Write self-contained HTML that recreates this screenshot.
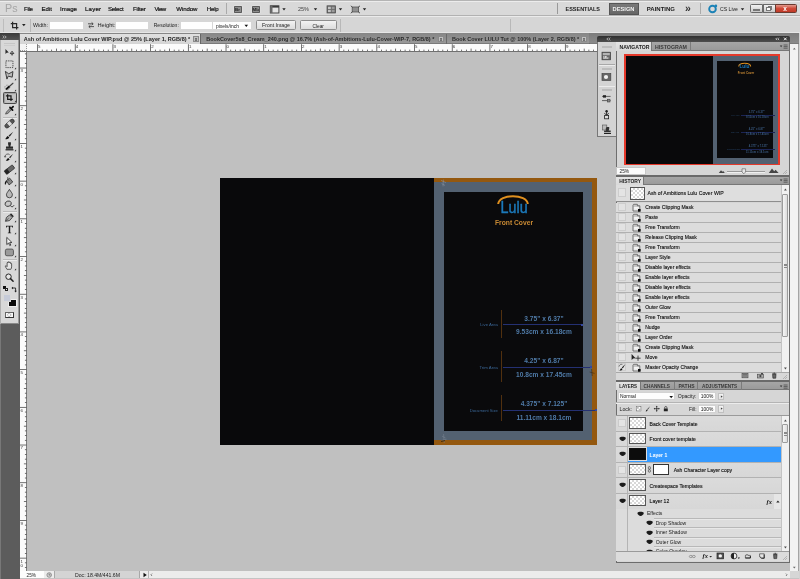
<!DOCTYPE html>
<html><head><meta charset="utf-8"><title>Photoshop</title>
<style>
html,body{margin:0;padding:0;}
body{width:800px;height:579px;overflow:hidden;position:relative;background:#c0c0c0;font-family:"Liberation Sans",sans-serif;}
#r{position:absolute;left:-6px;top:-6px;width:812px;height:591px;overflow:hidden;filter:blur(0.55px);}
#c{left:6px;top:6px;width:800px;height:579px;}
#r div,#r span,#r svg{position:absolute;box-sizing:border-box;}
#r span{white-space:nowrap;}
</style></head><body><div id="r"><div id="c">
<div style="left:-6px;top:-6px;width:812px;height:591px;background:#c0c0c0;"></div>
<div style="left:220px;top:178px;width:376.50px;height:267.00px;background:#09090b;overflow:hidden">
<div style="left:214.00px;top:0;width:162.50px;height:267.00px;background:#94580f"></div>
<div style="left:214.00px;top:4.30px;width:158.30px;height:258.10px;background:#536171"></div>
<div style="left:224.00px;top:13.60px;width:138.50px;height:239.10px;background:#0a0a0c"></div>
</div>
<svg style="left:494px;top:193px;" width="40" height="22" viewBox="0 0 40 22"><path d="M4.2 11 C5 0.5 33 0.5 33.8 11" fill="none" stroke="#e0901f" stroke-width="2"/></svg>
<span style="left:500.60px;top:199px;font-size:14.28px;line-height:16px;color:#1c79ba;font-weight:400;transform:scaleY(1.13);-webkit-text-stroke:0.4px #1c79ba;">Lulu</span>
<span style="left:495.00px;top:219px;font-size:6.71px;line-height:7px;color:#c98a34;font-weight:700;">Front Cover</span>
<div style="left:500.5px;top:310px;width:1px;height:27.5px;background:#51300f;"></div>
<div style="left:503px;top:324.1px;width:79px;height:1px;background:#243072;"></div>
<div style="left:580.5px;top:323.6px;width:2px;height:2px;background:#3347a0;"></div>
<span style="left:524.36px;top:315px;font-size:6.60px;line-height:7px;color:#4f7aa7;font-weight:700;">3.75" x 6.37"</span>
<span style="left:516.11px;top:328px;font-size:6.60px;line-height:7px;color:#4f7aa7;font-weight:700;">9.53cm x 16.18cm</span>
<span style="left:480.20px;top:322px;font-size:4.27px;line-height:5px;color:#3a6696;font-weight:400;">Live Area</span>
<div style="left:500.5px;top:351px;width:1px;height:30.5px;background:#51300f;"></div>
<div style="left:503px;top:366.8px;width:88.5px;height:1px;background:#243072;"></div>
<div style="left:590.0px;top:366.3px;width:2px;height:2px;background:#3347a0;"></div>
<span style="left:524.36px;top:357px;font-size:6.60px;line-height:7px;color:#4f7aa7;font-weight:700;">4.25" x 6.87"</span>
<span style="left:516.11px;top:371px;font-size:6.60px;line-height:7px;color:#4f7aa7;font-weight:700;">10.8cm x 17.45cm</span>
<span style="left:479.40px;top:365px;font-size:4.33px;line-height:5px;color:#3a6696;font-weight:400;">Trim Area</span>
<div style="left:500.5px;top:395.3px;width:1px;height:26.19999999999999px;background:#51300f;"></div>
<div style="left:503px;top:409.7px;width:93px;height:1px;background:#243072;"></div>
<div style="left:594.5px;top:409.2px;width:2px;height:2px;background:#3347a0;"></div>
<span style="left:520.69px;top:400px;font-size:6.60px;line-height:7px;color:#4f7aa7;font-weight:700;">4.375" x 7.125"</span>
<span style="left:516.47px;top:414px;font-size:6.60px;line-height:7px;color:#4f7aa7;font-weight:700;">11.11cm x 18.1cm</span>
<span style="left:469.70px;top:408px;font-size:4.17px;line-height:5px;color:#3a6696;font-weight:400;">Document Size</span>
<svg style="left:440px;top:179px;" width="8" height="10" viewBox="0 0 8 10"><path d="M1 1.4 L6 3.6 M3.4 0.6 L3 7.4 M1.6 4.6 L5 6.4" stroke="#8a93a0" stroke-width="0.7" fill="none" opacity="0.8"/></svg>
<svg style="left:440px;top:432px;" width="9" height="12" viewBox="0 0 9 12"><path d="M1.4 8.6 L6.6 7.2 M3.6 2 L4.2 11 M2 4.2 L5.6 6" stroke="#7d8794" stroke-width="0.7" fill="none" opacity="0.7"/><path d="M1 9.4 L5 8.6" stroke="#2a1c08" stroke-width="0.8"/></svg>
<svg style="left:588px;top:368px;" width="8" height="10" viewBox="0 0 8 10"><path d="M3.6 1 L4.2 8 M1.6 4 L6.6 5.4" stroke="#3a2a14" stroke-width="0.7" fill="none" opacity="0.8"/></svg>
<div style="left:790px;top:43.5px;width:16px;height:542px;background:#d0d0d0;"></div>
<div style="left:790.4px;top:43.5px;width:7.6px;height:527.3px;background:#f2f2f2;"></div>
<svg style="left:791px;top:46px;" width="7" height="5" viewBox="0 0 7 5"><path d="M1.9 1.8 L4.7 1.8 L3.3 3.6 Z" fill="#666" transform="rotate(180 3.3 2.7)"/></svg>
<svg style="left:791px;top:565px;" width="7" height="5" viewBox="0 0 7 5"><path d="M1.9 1.8 L4.7 1.8 L3.3 3.6 Z" fill="#666"/></svg>
<div style="left:19.5px;top:570.8px;width:787px;height:15px;background:#d2d2d2;"></div>
<div style="left:19.5px;top:571px;width:771px;height:6.7px;background:#ececec;"></div>
<div style="left:19.5px;top:577.7px;width:787px;height:8px;background:#c4c4c4;"></div>
<div style="left:790px;top:570.8px;width:16px;height:7px;background:#d6d6d6;"></div>
<div style="left:798px;top:43.5px;width:0.8px;height:527.5px;background:#a4a4a4;"></div>
<div style="left:20px;top:571.2px;width:23.6px;height:6.4px;background:#fdfdfd;"></div>
<span style="left:26.60px;top:573px;font-size:4.70px;line-height:5px;color:#222;font-weight:400;">25%</span>
<svg style="left:45.5px;top:571.6px;" width="7" height="6" viewBox="0 0 7 6"><circle cx="3.2" cy="3" r="2.3" fill="#cfcfcf" stroke="#777" stroke-width="0.7"/><path d="M3.2 1.6 V3.1 H4.4" stroke="#555" stroke-width="0.6" fill="none"/></svg>
<div style="left:54.3px;top:571px;width:86px;height:6.7px;background:#d4d4d4;border-left:0.6px solid #a8a8a8;border-right:0.6px solid #a8a8a8;"></div>
<span style="left:75.00px;top:572px;font-size:5.16px;line-height:6px;color:#222;font-weight:400;">Doc: 18.4M/441.6M</span>
<svg style="left:141.5px;top:571.6px;" width="6" height="6" viewBox="0 0 6 6"><path d="M1.5 0.8 L4.8 3 L1.5 5.2 Z" fill="#111"/></svg>
<div style="left:147.5px;top:571px;width:0.6px;height:6.7px;background:#b5b5b5;"></div>
<svg style="left:149px;top:572px;" width="5" height="6" viewBox="0 0 5 6"><path d="M3.1 1.6 L1.9 2.8 L3.1 4" stroke="#666" stroke-width="0.8" fill="none"/></svg>
<svg style="left:783.8px;top:572px;" width="5" height="6" viewBox="0 0 5 6"><path d="M1.9 1.6 L3.1 2.8 L1.9 4" stroke="#666" stroke-width="0.8" fill="none"/></svg>
<div style="left:19.5px;top:43.5px;width:578px;height:7.5px;background:#fbfbfb;"></div>
<div style="left:19.5px;top:43.5px;width:7.2px;height:527px;background:#fbfbfb;"></div>
<div style="left:19.5px;top:50.5px;width:578px;height:0.9px;background:#707070;"></div>
<div style="left:26.2px;top:43.5px;width:0.8px;height:527.3px;background:#7c7c7c;"></div>
<div style="left:19.5px;top:43.5px;width:7.2px;height:7.5px;background:#f4f4f4;border-right:0.6px dotted #999;border-bottom:0.6px dotted #999;"></div>
<svg style="left:0px;top:43.5px;" width="597.5" height="7.5" viewBox="0 0 597.5 7.5"><rect x="37.15" y="0.20" width="0.75" height="7" fill="#444"/><rect x="41.86" y="5.60" width="0.75" height="1.6" fill="#444"/><rect x="46.57" y="5.60" width="0.75" height="1.6" fill="#444"/><rect x="51.29" y="5.60" width="0.75" height="1.6" fill="#444"/><rect x="56.00" y="4.60" width="0.75" height="2.6" fill="#444"/><rect x="60.71" y="5.60" width="0.75" height="1.6" fill="#444"/><rect x="65.43" y="5.60" width="0.75" height="1.6" fill="#444"/><rect x="70.14" y="5.60" width="0.75" height="1.6" fill="#444"/><text x="38.10" y="4.4" font-size="4.4" fill="#3a3a3a" font-family="Liberation Sans, sans-serif">5</text><rect x="74.85" y="0.20" width="0.75" height="7" fill="#444"/><rect x="79.56" y="5.60" width="0.75" height="1.6" fill="#444"/><rect x="84.27" y="5.60" width="0.75" height="1.6" fill="#444"/><rect x="88.99" y="5.60" width="0.75" height="1.6" fill="#444"/><rect x="93.70" y="4.60" width="0.75" height="2.6" fill="#444"/><rect x="98.41" y="5.60" width="0.75" height="1.6" fill="#444"/><rect x="103.12" y="5.60" width="0.75" height="1.6" fill="#444"/><rect x="107.84" y="5.60" width="0.75" height="1.6" fill="#444"/><text x="75.80" y="4.4" font-size="4.4" fill="#3a3a3a" font-family="Liberation Sans, sans-serif">4</text><rect x="112.55" y="0.20" width="0.75" height="7" fill="#444"/><rect x="117.26" y="5.60" width="0.75" height="1.6" fill="#444"/><rect x="121.97" y="5.60" width="0.75" height="1.6" fill="#444"/><rect x="126.69" y="5.60" width="0.75" height="1.6" fill="#444"/><rect x="131.40" y="4.60" width="0.75" height="2.6" fill="#444"/><rect x="136.11" y="5.60" width="0.75" height="1.6" fill="#444"/><rect x="140.82" y="5.60" width="0.75" height="1.6" fill="#444"/><rect x="145.54" y="5.60" width="0.75" height="1.6" fill="#444"/><text x="113.50" y="4.4" font-size="4.4" fill="#3a3a3a" font-family="Liberation Sans, sans-serif">3</text><rect x="150.25" y="0.20" width="0.75" height="7" fill="#444"/><rect x="154.96" y="5.60" width="0.75" height="1.6" fill="#444"/><rect x="159.68" y="5.60" width="0.75" height="1.6" fill="#444"/><rect x="164.39" y="5.60" width="0.75" height="1.6" fill="#444"/><rect x="169.10" y="4.60" width="0.75" height="2.6" fill="#444"/><rect x="173.81" y="5.60" width="0.75" height="1.6" fill="#444"/><rect x="178.53" y="5.60" width="0.75" height="1.6" fill="#444"/><rect x="183.24" y="5.60" width="0.75" height="1.6" fill="#444"/><text x="151.20" y="4.4" font-size="4.4" fill="#3a3a3a" font-family="Liberation Sans, sans-serif">2</text><rect x="187.95" y="0.20" width="0.75" height="7" fill="#444"/><rect x="192.66" y="5.60" width="0.75" height="1.6" fill="#444"/><rect x="197.38" y="5.60" width="0.75" height="1.6" fill="#444"/><rect x="202.09" y="5.60" width="0.75" height="1.6" fill="#444"/><rect x="206.80" y="4.60" width="0.75" height="2.6" fill="#444"/><rect x="211.51" y="5.60" width="0.75" height="1.6" fill="#444"/><rect x="216.23" y="5.60" width="0.75" height="1.6" fill="#444"/><rect x="220.94" y="5.60" width="0.75" height="1.6" fill="#444"/><text x="188.90" y="4.4" font-size="4.4" fill="#3a3a3a" font-family="Liberation Sans, sans-serif">1</text><rect x="225.65" y="0.20" width="0.75" height="7" fill="#444"/><rect x="230.36" y="5.60" width="0.75" height="1.6" fill="#444"/><rect x="235.08" y="5.60" width="0.75" height="1.6" fill="#444"/><rect x="239.79" y="5.60" width="0.75" height="1.6" fill="#444"/><rect x="244.50" y="4.60" width="0.75" height="2.6" fill="#444"/><rect x="249.21" y="5.60" width="0.75" height="1.6" fill="#444"/><rect x="253.93" y="5.60" width="0.75" height="1.6" fill="#444"/><rect x="258.64" y="5.60" width="0.75" height="1.6" fill="#444"/><text x="226.60" y="4.4" font-size="4.4" fill="#3a3a3a" font-family="Liberation Sans, sans-serif">0</text><rect x="263.35" y="0.20" width="0.75" height="7" fill="#444"/><rect x="268.06" y="5.60" width="0.75" height="1.6" fill="#444"/><rect x="272.77" y="5.60" width="0.75" height="1.6" fill="#444"/><rect x="277.49" y="5.60" width="0.75" height="1.6" fill="#444"/><rect x="282.20" y="4.60" width="0.75" height="2.6" fill="#444"/><rect x="286.91" y="5.60" width="0.75" height="1.6" fill="#444"/><rect x="291.62" y="5.60" width="0.75" height="1.6" fill="#444"/><rect x="296.34" y="5.60" width="0.75" height="1.6" fill="#444"/><text x="264.30" y="4.4" font-size="4.4" fill="#3a3a3a" font-family="Liberation Sans, sans-serif">1</text><rect x="301.05" y="0.20" width="0.75" height="7" fill="#444"/><rect x="305.76" y="5.60" width="0.75" height="1.6" fill="#444"/><rect x="310.47" y="5.60" width="0.75" height="1.6" fill="#444"/><rect x="315.19" y="5.60" width="0.75" height="1.6" fill="#444"/><rect x="319.90" y="4.60" width="0.75" height="2.6" fill="#444"/><rect x="324.61" y="5.60" width="0.75" height="1.6" fill="#444"/><rect x="329.32" y="5.60" width="0.75" height="1.6" fill="#444"/><rect x="334.04" y="5.60" width="0.75" height="1.6" fill="#444"/><text x="302.00" y="4.4" font-size="4.4" fill="#3a3a3a" font-family="Liberation Sans, sans-serif">2</text><rect x="338.75" y="0.20" width="0.75" height="7" fill="#444"/><rect x="343.46" y="5.60" width="0.75" height="1.6" fill="#444"/><rect x="348.18" y="5.60" width="0.75" height="1.6" fill="#444"/><rect x="352.89" y="5.60" width="0.75" height="1.6" fill="#444"/><rect x="357.60" y="4.60" width="0.75" height="2.6" fill="#444"/><rect x="362.31" y="5.60" width="0.75" height="1.6" fill="#444"/><rect x="367.02" y="5.60" width="0.75" height="1.6" fill="#444"/><rect x="371.74" y="5.60" width="0.75" height="1.6" fill="#444"/><text x="339.70" y="4.4" font-size="4.4" fill="#3a3a3a" font-family="Liberation Sans, sans-serif">3</text><rect x="376.45" y="0.20" width="0.75" height="7" fill="#444"/><rect x="381.16" y="5.60" width="0.75" height="1.6" fill="#444"/><rect x="385.88" y="5.60" width="0.75" height="1.6" fill="#444"/><rect x="390.59" y="5.60" width="0.75" height="1.6" fill="#444"/><rect x="395.30" y="4.60" width="0.75" height="2.6" fill="#444"/><rect x="400.01" y="5.60" width="0.75" height="1.6" fill="#444"/><rect x="404.72" y="5.60" width="0.75" height="1.6" fill="#444"/><rect x="409.44" y="5.60" width="0.75" height="1.6" fill="#444"/><text x="377.40" y="4.4" font-size="4.4" fill="#3a3a3a" font-family="Liberation Sans, sans-serif">4</text><rect x="414.15" y="0.20" width="0.75" height="7" fill="#444"/><rect x="418.86" y="5.60" width="0.75" height="1.6" fill="#444"/><rect x="423.57" y="5.60" width="0.75" height="1.6" fill="#444"/><rect x="428.29" y="5.60" width="0.75" height="1.6" fill="#444"/><rect x="433.00" y="4.60" width="0.75" height="2.6" fill="#444"/><rect x="437.71" y="5.60" width="0.75" height="1.6" fill="#444"/><rect x="442.42" y="5.60" width="0.75" height="1.6" fill="#444"/><rect x="447.14" y="5.60" width="0.75" height="1.6" fill="#444"/><text x="415.10" y="4.4" font-size="4.4" fill="#3a3a3a" font-family="Liberation Sans, sans-serif">5</text><rect x="451.85" y="0.20" width="0.75" height="7" fill="#444"/><rect x="456.56" y="5.60" width="0.75" height="1.6" fill="#444"/><rect x="461.28" y="5.60" width="0.75" height="1.6" fill="#444"/><rect x="465.99" y="5.60" width="0.75" height="1.6" fill="#444"/><rect x="470.70" y="4.60" width="0.75" height="2.6" fill="#444"/><rect x="475.41" y="5.60" width="0.75" height="1.6" fill="#444"/><rect x="480.12" y="5.60" width="0.75" height="1.6" fill="#444"/><rect x="484.84" y="5.60" width="0.75" height="1.6" fill="#444"/><text x="452.80" y="4.4" font-size="4.4" fill="#3a3a3a" font-family="Liberation Sans, sans-serif">6</text><rect x="489.55" y="0.20" width="0.75" height="7" fill="#444"/><rect x="494.26" y="5.60" width="0.75" height="1.6" fill="#444"/><rect x="498.98" y="5.60" width="0.75" height="1.6" fill="#444"/><rect x="503.69" y="5.60" width="0.75" height="1.6" fill="#444"/><rect x="508.40" y="4.60" width="0.75" height="2.6" fill="#444"/><rect x="513.11" y="5.60" width="0.75" height="1.6" fill="#444"/><rect x="517.83" y="5.60" width="0.75" height="1.6" fill="#444"/><rect x="522.54" y="5.60" width="0.75" height="1.6" fill="#444"/><text x="490.50" y="4.4" font-size="4.4" fill="#3a3a3a" font-family="Liberation Sans, sans-serif">7</text><rect x="527.25" y="0.20" width="0.75" height="7" fill="#444"/><rect x="531.96" y="5.60" width="0.75" height="1.6" fill="#444"/><rect x="536.67" y="5.60" width="0.75" height="1.6" fill="#444"/><rect x="541.39" y="5.60" width="0.75" height="1.6" fill="#444"/><rect x="546.10" y="4.60" width="0.75" height="2.6" fill="#444"/><rect x="550.81" y="5.60" width="0.75" height="1.6" fill="#444"/><rect x="555.52" y="5.60" width="0.75" height="1.6" fill="#444"/><rect x="560.24" y="5.60" width="0.75" height="1.6" fill="#444"/><text x="528.20" y="4.4" font-size="4.4" fill="#3a3a3a" font-family="Liberation Sans, sans-serif">8</text><rect x="564.95" y="0.20" width="0.75" height="7" fill="#444"/><rect x="569.66" y="5.60" width="0.75" height="1.6" fill="#444"/><rect x="574.37" y="5.60" width="0.75" height="1.6" fill="#444"/><rect x="579.09" y="5.60" width="0.75" height="1.6" fill="#444"/><rect x="583.80" y="4.60" width="0.75" height="2.6" fill="#444"/><rect x="588.51" y="5.60" width="0.75" height="1.6" fill="#444"/><rect x="593.22" y="5.60" width="0.75" height="1.6" fill="#444"/><text x="565.90" y="4.4" font-size="4.4" fill="#3a3a3a" font-family="Liberation Sans, sans-serif">9</text></svg>
<svg style="left:0px;top:0px;" width="27" height="571" viewBox="0 0 27 571"><rect x="24.90" y="53.51" width="1.6" height="0.75" fill="#444"/><rect x="24.90" y="58.22" width="1.6" height="0.75" fill="#444"/><rect x="24.90" y="62.94" width="1.6" height="0.75" fill="#444"/><rect x="19.50" y="67.65" width="7" height="0.75" fill="#444"/><rect x="24.90" y="72.36" width="1.6" height="0.75" fill="#444"/><rect x="24.90" y="77.07" width="1.6" height="0.75" fill="#444"/><rect x="24.90" y="81.79" width="1.6" height="0.75" fill="#444"/><rect x="23.90" y="86.50" width="2.6" height="0.75" fill="#444"/><rect x="24.90" y="91.21" width="1.6" height="0.75" fill="#444"/><rect x="24.90" y="95.92" width="1.6" height="0.75" fill="#444"/><rect x="24.90" y="100.64" width="1.6" height="0.75" fill="#444"/><text x="20.6" y="72.40" font-size="4.4" fill="#3a3a3a" font-family="Liberation Sans, sans-serif">3</text><rect x="19.50" y="105.35" width="7" height="0.75" fill="#444"/><rect x="24.90" y="110.06" width="1.6" height="0.75" fill="#444"/><rect x="24.90" y="114.77" width="1.6" height="0.75" fill="#444"/><rect x="24.90" y="119.49" width="1.6" height="0.75" fill="#444"/><rect x="23.90" y="124.20" width="2.6" height="0.75" fill="#444"/><rect x="24.90" y="128.91" width="1.6" height="0.75" fill="#444"/><rect x="24.90" y="133.62" width="1.6" height="0.75" fill="#444"/><rect x="24.90" y="138.34" width="1.6" height="0.75" fill="#444"/><text x="20.6" y="110.10" font-size="4.4" fill="#3a3a3a" font-family="Liberation Sans, sans-serif">2</text><rect x="19.50" y="143.05" width="7" height="0.75" fill="#444"/><rect x="24.90" y="147.76" width="1.6" height="0.75" fill="#444"/><rect x="24.90" y="152.47" width="1.6" height="0.75" fill="#444"/><rect x="24.90" y="157.19" width="1.6" height="0.75" fill="#444"/><rect x="23.90" y="161.90" width="2.6" height="0.75" fill="#444"/><rect x="24.90" y="166.61" width="1.6" height="0.75" fill="#444"/><rect x="24.90" y="171.32" width="1.6" height="0.75" fill="#444"/><rect x="24.90" y="176.04" width="1.6" height="0.75" fill="#444"/><text x="20.6" y="147.80" font-size="4.4" fill="#3a3a3a" font-family="Liberation Sans, sans-serif">1</text><rect x="19.50" y="180.75" width="7" height="0.75" fill="#444"/><rect x="24.90" y="185.46" width="1.6" height="0.75" fill="#444"/><rect x="24.90" y="190.18" width="1.6" height="0.75" fill="#444"/><rect x="24.90" y="194.89" width="1.6" height="0.75" fill="#444"/><rect x="23.90" y="199.60" width="2.6" height="0.75" fill="#444"/><rect x="24.90" y="204.31" width="1.6" height="0.75" fill="#444"/><rect x="24.90" y="209.03" width="1.6" height="0.75" fill="#444"/><rect x="24.90" y="213.74" width="1.6" height="0.75" fill="#444"/><text x="20.6" y="185.50" font-size="4.4" fill="#3a3a3a" font-family="Liberation Sans, sans-serif">0</text><rect x="19.50" y="218.45" width="7" height="0.75" fill="#444"/><rect x="24.90" y="223.16" width="1.6" height="0.75" fill="#444"/><rect x="24.90" y="227.88" width="1.6" height="0.75" fill="#444"/><rect x="24.90" y="232.59" width="1.6" height="0.75" fill="#444"/><rect x="23.90" y="237.30" width="2.6" height="0.75" fill="#444"/><rect x="24.90" y="242.01" width="1.6" height="0.75" fill="#444"/><rect x="24.90" y="246.73" width="1.6" height="0.75" fill="#444"/><rect x="24.90" y="251.44" width="1.6" height="0.75" fill="#444"/><text x="20.6" y="223.20" font-size="4.4" fill="#3a3a3a" font-family="Liberation Sans, sans-serif">1</text><rect x="19.50" y="256.15" width="7" height="0.75" fill="#444"/><rect x="24.90" y="260.86" width="1.6" height="0.75" fill="#444"/><rect x="24.90" y="265.57" width="1.6" height="0.75" fill="#444"/><rect x="24.90" y="270.29" width="1.6" height="0.75" fill="#444"/><rect x="23.90" y="275.00" width="2.6" height="0.75" fill="#444"/><rect x="24.90" y="279.71" width="1.6" height="0.75" fill="#444"/><rect x="24.90" y="284.42" width="1.6" height="0.75" fill="#444"/><rect x="24.90" y="289.14" width="1.6" height="0.75" fill="#444"/><text x="20.6" y="260.90" font-size="4.4" fill="#3a3a3a" font-family="Liberation Sans, sans-serif">2</text><rect x="19.50" y="293.85" width="7" height="0.75" fill="#444"/><rect x="24.90" y="298.56" width="1.6" height="0.75" fill="#444"/><rect x="24.90" y="303.27" width="1.6" height="0.75" fill="#444"/><rect x="24.90" y="307.99" width="1.6" height="0.75" fill="#444"/><rect x="23.90" y="312.70" width="2.6" height="0.75" fill="#444"/><rect x="24.90" y="317.41" width="1.6" height="0.75" fill="#444"/><rect x="24.90" y="322.12" width="1.6" height="0.75" fill="#444"/><rect x="24.90" y="326.84" width="1.6" height="0.75" fill="#444"/><text x="20.6" y="298.60" font-size="4.4" fill="#3a3a3a" font-family="Liberation Sans, sans-serif">3</text><rect x="19.50" y="331.55" width="7" height="0.75" fill="#444"/><rect x="24.90" y="336.26" width="1.6" height="0.75" fill="#444"/><rect x="24.90" y="340.97" width="1.6" height="0.75" fill="#444"/><rect x="24.90" y="345.69" width="1.6" height="0.75" fill="#444"/><rect x="23.90" y="350.40" width="2.6" height="0.75" fill="#444"/><rect x="24.90" y="355.11" width="1.6" height="0.75" fill="#444"/><rect x="24.90" y="359.82" width="1.6" height="0.75" fill="#444"/><rect x="24.90" y="364.54" width="1.6" height="0.75" fill="#444"/><text x="20.6" y="336.30" font-size="4.4" fill="#3a3a3a" font-family="Liberation Sans, sans-serif">4</text><rect x="19.50" y="369.25" width="7" height="0.75" fill="#444"/><rect x="24.90" y="373.96" width="1.6" height="0.75" fill="#444"/><rect x="24.90" y="378.68" width="1.6" height="0.75" fill="#444"/><rect x="24.90" y="383.39" width="1.6" height="0.75" fill="#444"/><rect x="23.90" y="388.10" width="2.6" height="0.75" fill="#444"/><rect x="24.90" y="392.81" width="1.6" height="0.75" fill="#444"/><rect x="24.90" y="397.52" width="1.6" height="0.75" fill="#444"/><rect x="24.90" y="402.24" width="1.6" height="0.75" fill="#444"/><text x="20.6" y="374.00" font-size="4.4" fill="#3a3a3a" font-family="Liberation Sans, sans-serif">5</text><rect x="19.50" y="406.95" width="7" height="0.75" fill="#444"/><rect x="24.90" y="411.66" width="1.6" height="0.75" fill="#444"/><rect x="24.90" y="416.38" width="1.6" height="0.75" fill="#444"/><rect x="24.90" y="421.09" width="1.6" height="0.75" fill="#444"/><rect x="23.90" y="425.80" width="2.6" height="0.75" fill="#444"/><rect x="24.90" y="430.51" width="1.6" height="0.75" fill="#444"/><rect x="24.90" y="435.22" width="1.6" height="0.75" fill="#444"/><rect x="24.90" y="439.94" width="1.6" height="0.75" fill="#444"/><text x="20.6" y="411.70" font-size="4.4" fill="#3a3a3a" font-family="Liberation Sans, sans-serif">6</text><rect x="19.50" y="444.65" width="7" height="0.75" fill="#444"/><rect x="24.90" y="449.36" width="1.6" height="0.75" fill="#444"/><rect x="24.90" y="454.07" width="1.6" height="0.75" fill="#444"/><rect x="24.90" y="458.79" width="1.6" height="0.75" fill="#444"/><rect x="23.90" y="463.50" width="2.6" height="0.75" fill="#444"/><rect x="24.90" y="468.21" width="1.6" height="0.75" fill="#444"/><rect x="24.90" y="472.92" width="1.6" height="0.75" fill="#444"/><rect x="24.90" y="477.64" width="1.6" height="0.75" fill="#444"/><text x="20.6" y="449.40" font-size="4.4" fill="#3a3a3a" font-family="Liberation Sans, sans-serif">7</text><rect x="19.50" y="482.35" width="7" height="0.75" fill="#444"/><rect x="24.90" y="487.06" width="1.6" height="0.75" fill="#444"/><rect x="24.90" y="491.78" width="1.6" height="0.75" fill="#444"/><rect x="24.90" y="496.49" width="1.6" height="0.75" fill="#444"/><rect x="23.90" y="501.20" width="2.6" height="0.75" fill="#444"/><rect x="24.90" y="505.91" width="1.6" height="0.75" fill="#444"/><rect x="24.90" y="510.62" width="1.6" height="0.75" fill="#444"/><rect x="24.90" y="515.34" width="1.6" height="0.75" fill="#444"/><text x="20.6" y="487.10" font-size="4.4" fill="#3a3a3a" font-family="Liberation Sans, sans-serif">8</text><rect x="19.50" y="520.05" width="7" height="0.75" fill="#444"/><rect x="24.90" y="524.76" width="1.6" height="0.75" fill="#444"/><rect x="24.90" y="529.47" width="1.6" height="0.75" fill="#444"/><rect x="24.90" y="534.19" width="1.6" height="0.75" fill="#444"/><rect x="23.90" y="538.90" width="2.6" height="0.75" fill="#444"/><rect x="24.90" y="543.61" width="1.6" height="0.75" fill="#444"/><rect x="24.90" y="548.32" width="1.6" height="0.75" fill="#444"/><rect x="24.90" y="553.04" width="1.6" height="0.75" fill="#444"/><text x="20.6" y="524.80" font-size="4.4" fill="#3a3a3a" font-family="Liberation Sans, sans-serif">9</text><rect x="19.50" y="557.75" width="7" height="0.75" fill="#444"/><rect x="24.90" y="562.46" width="1.6" height="0.75" fill="#444"/><rect x="24.90" y="567.17" width="1.6" height="0.75" fill="#444"/><text x="20.6" y="562.50" font-size="4.4" fill="#3a3a3a" font-family="Liberation Sans, sans-serif">1</text><text x="20.6" y="566.90" font-size="4.4" fill="#3a3a3a" font-family="Liberation Sans, sans-serif">0</text></svg>
<div style="left:-6px;top:-6px;width:812px;height:22.5px;background:#d9d9d9;"></div>
<div style="left:-6px;top:-6px;width:812px;height:6.6px;background:#b4b4b4;"></div>
<div style="left:-6px;top:0.6px;width:812px;height:1px;background:#ececec;"></div>
<div style="left:-6px;top:15.3px;width:812px;height:0.9px;background:#b2b2b2;"></div>
<div style="left:-6px;top:16.2px;width:812px;height:0.9px;background:#ebebeb;"></div>
<span style="left:5.00px;top:2px;font-size:10.71px;line-height:12px;color:#a6a6a6;font-weight:400;">Ps</span>
<span style="left:24.00px;top:5px;font-size:6.10px;line-height:7px;color:#111;font-weight:400;letter-spacing:-0.277px;-webkit-text-stroke:0.18px #111;">File</span>
<span style="left:41.50px;top:5px;font-size:6.10px;line-height:7px;color:#111;font-weight:400;letter-spacing:-0.004px;-webkit-text-stroke:0.18px #111;">Edit</span>
<span style="left:60.00px;top:5px;font-size:6.10px;line-height:7px;color:#111;font-weight:400;letter-spacing:0.011px;-webkit-text-stroke:0.18px #111;">Image</span>
<span style="left:85.00px;top:5px;font-size:6.10px;line-height:7px;color:#111;font-weight:400;letter-spacing:0.185px;-webkit-text-stroke:0.18px #111;">Layer</span>
<span style="left:108.00px;top:5px;font-size:6.10px;line-height:7px;color:#111;font-weight:400;letter-spacing:-0.241px;-webkit-text-stroke:0.18px #111;">Select</span>
<span style="left:133.00px;top:5px;font-size:6.10px;line-height:7px;color:#111;font-weight:400;letter-spacing:-0.161px;-webkit-text-stroke:0.18px #111;">Filter</span>
<span style="left:154.50px;top:5px;font-size:6.10px;line-height:7px;color:#111;font-weight:400;letter-spacing:-0.454px;-webkit-text-stroke:0.18px #111;">View</span>
<span style="left:176.25px;top:5px;font-size:6.10px;line-height:7px;color:#111;font-weight:400;letter-spacing:-0.089px;-webkit-text-stroke:0.18px #111;">Window</span>
<span style="left:206.75px;top:5px;font-size:6.10px;line-height:7px;color:#111;font-weight:400;letter-spacing:-0.182px;-webkit-text-stroke:0.18px #111;">Help</span>
<div style="left:226px;top:3px;width:0.7px;height:11px;background:#aaa;"></div>
<div style="left:234px;top:5.5px;width:8.4px;height:7.2px;background:#8e8e8e;border:0.6px solid #5a5a5a;border-radius:0.8px;box-shadow:0 0 0 0.5px #e6e6e6;"></div>
<span style="left:235.10px;top:7px;font-size:4.40px;line-height:5px;color:#262626;font-weight:700;">Br</span>
<div style="left:251.5px;top:5.5px;width:8.4px;height:7.2px;background:#8e8e8e;border:0.6px solid #5a5a5a;border-radius:0.8px;box-shadow:0 0 0 0.5px #e6e6e6;"></div>
<span style="left:252.60px;top:7px;font-size:4.40px;line-height:5px;color:#262626;font-weight:700;">Mb</span>
<svg style="left:269px;top:3.5px;" width="18" height="11" viewBox="0 0 18 11"><rect x="1.3" y="1.8" width="8.6" height="7.2" fill="#e4e4e4" stroke="#3a3a3a" stroke-width="0.9"/><rect x="1.3" y="1.8" width="8.6" height="1.8" fill="#3a3a3a"/><rect x="1.3" y="1.8" width="2.2" height="7.2" fill="#6a6a6a"/><path d="M13.3 4.3 h3.4 l-1.7 2.2z" fill="#222"/></svg>
<span style="left:298.00px;top:6px;font-size:5.50px;line-height:6px;color:#444;font-weight:400;">25%</span>
<svg style="left:312px;top:3.5px;" width="8" height="11" viewBox="0 0 8 11"><path d="M1.8 4.3 h3.4 l-1.7 2.2z" fill="#222"/></svg>
<svg style="left:325px;top:3.5px;" width="20" height="11" viewBox="0 0 20 11"><rect x="2" y="1.8" width="8.6" height="7.2" fill="#6e6e6e" stroke="#4a4a4a" stroke-width="0.7"/><rect x="3" y="2.8" width="2.8" height="2.2" fill="#c4c4c4"/><rect x="6.8" y="2.8" width="2.8" height="2.2" fill="#9a9a9a"/><rect x="3" y="5.9" width="2.8" height="2.2" fill="#c4c4c4"/><rect x="6.8" y="5.9" width="2.8" height="2.2" fill="#9a9a9a"/><path d="M13.8 4.3 h3.4 l-1.7 2.2z" fill="#222"/></svg>
<svg style="left:349px;top:3.5px;" width="20" height="11" viewBox="0 0 20 11"><rect x="3.2" y="3" width="6.4" height="5" fill="#909090" stroke="#555" stroke-width="0.8"/><path d="M1.8 1.8 L3.6 3.4 M11 1.8 L9.2 3.4 M1.8 9.2 L3.6 7.6 M11 9.2 L9.2 7.6" stroke="#444" stroke-width="0.9"/><path d="M13.8 4.3 h3.4 l-1.7 2.2z" fill="#222"/></svg>
<div style="left:557px;top:3px;width:0.8px;height:11px;background:#999;"></div>
<span style="left:565.50px;top:6px;font-size:5.49px;line-height:6px;color:#1a1a1a;font-weight:700;">ESSENTIALS</span>
<div style="left:608.5px;top:2.5px;width:30.5px;height:12px;background:linear-gradient(#7a7a7a,#666);border:0.6px solid #555;"></div>
<span style="left:612.50px;top:6px;font-size:5.74px;line-height:6px;color:#f2f2f2;font-weight:700;">DESIGN</span>
<span style="left:646.75px;top:6px;font-size:6.01px;line-height:6px;color:#1a1a1a;font-weight:700;">PAINTING</span>
<span style="left:685.00px;top:2px;font-size:10.50px;line-height:12px;color:#333;font-weight:700;">»</span>
<div style="left:700px;top:3px;width:0.8px;height:11px;background:#aaa;"></div>
<svg style="left:707px;top:3px;" width="12" height="12" viewBox="0 0 12 12"><circle cx="5.5" cy="6" r="3.3" fill="none" stroke="#1b82b6" stroke-width="1.9"/><circle cx="8.9" cy="2.9" r="1.3" fill="#1b82b6"/></svg>
<span style="left:720.00px;top:6px;font-size:5.14px;line-height:6px;color:#1a1a1a;font-weight:400;">CS Live</span>
<svg style="left:738.5px;top:3.5px;" width="8" height="11" viewBox="0 0 8 11"><path d="M1.8 4.3 h3.4 l-1.7 2.2z" fill="#222"/></svg>
<div style="left:749.5px;top:3.5px;width:13.5px;height:9.5px;background:linear-gradient(#f2f2f2,#c9c9c9);border:0.7px solid #6a6a6a;border-radius:1.5px 0 0 1.5px;"></div>
<div style="left:753px;top:8.6px;width:6.5px;height:2.6px;background:#fafafa;border:0.6px solid #777;"></div>
<div style="left:762.5px;top:3.5px;width:13px;height:9.5px;background:linear-gradient(#f2f2f2,#c9c9c9);border:0.7px solid #6a6a6a;"></div>
<div style="left:767.5px;top:5.8px;width:4.8px;height:3.8px;background:#f2f2f2;border:0.6px solid #777;"></div>
<div style="left:765.8px;top:7.4px;width:4.8px;height:3.8px;background:#fafafa;border:0.6px solid #777;"></div>
<div style="left:775px;top:3.5px;width:21.5px;height:9.5px;background:linear-gradient(#e29a8c,#cf4a38 50%,#c03a28);border:0.7px solid #6a3a30;border-radius:0 1.5px 1.5px 0;"></div>
<span style="left:783.20px;top:5px;font-size:6.50px;line-height:7px;color:#fff;font-weight:700;">x</span>
<div style="left:-6px;top:17.1px;width:812px;height:16.7px;background:#d6d6d6;"></div>
<div style="left:-6px;top:32px;width:812px;height:0.9px;background:#e6e6e6;"></div>
<div style="left:2.5px;top:19px;width:0.8px;height:13px;background:#bdbdbd;"></div>
<svg style="left:9.5px;top:20.5px;" width="10" height="10" viewBox="0 0 10 10"><path d="M2.6 0.8 V6.6 H8.4 M0.8 2.6 H6.6 V8.4" fill="none" stroke="#2a2a2a" stroke-width="1.2"/></svg>
<svg style="left:20.5px;top:20px;" width="6" height="10" viewBox="0 0 6 10"><path d="M1 4 h3.6 l-1.8 2.3z" fill="#222"/></svg>
<div style="left:30px;top:19px;width:0.8px;height:13px;background:#b8b8b8;"></div>
<span style="left:33.00px;top:22px;font-size:5.29px;line-height:6px;color:#222;font-weight:400;">Width:</span>
<div style="left:50px;top:21.6px;width:32.5px;height:7.8px;background:#fefefe;"></div>
<svg style="left:86.5px;top:21px;" width="8" height="8" viewBox="0 0 8 8"><path d="M1 2.8 H6 M4.6 1.4 L6.2 2.8 L4.6 4.2 M7 5.6 H2 M3.4 4.2 L1.8 5.6 L3.4 7" stroke="#333" stroke-width="0.8" fill="none"/></svg>
<span style="left:97.50px;top:22px;font-size:5.68px;line-height:6px;color:#222;font-weight:400;">Height:</span>
<div style="left:116.2px;top:21.6px;width:32px;height:7.8px;background:#fefefe;"></div>
<span style="left:153.75px;top:22px;font-size:5.00px;line-height:6px;color:#222;font-weight:400;">Resolution:</span>
<div style="left:180.5px;top:21.6px;width:31.5px;height:7.8px;background:#fefefe;"></div>
<div style="left:213.4px;top:21.6px;width:37.2px;height:7.8px;background:#fefefe;"></div>
<span style="left:216.00px;top:24px;font-size:4.93px;line-height:5px;color:#222;font-weight:400;">pixels/inch</span>
<svg style="left:243px;top:21px;" width="7" height="9" viewBox="0 0 7 9"><path d="M1.5 3.7 h3.6 l-1.8 2.3z" fill="#111"/></svg>
<div style="left:256.2px;top:20px;width:39.6px;height:9.6px;background:linear-gradient(#f3f3f3,#dcdcdc);border:0.6px solid #8e8e8e;border-radius:1.5px;"></div>
<span style="left:262.00px;top:22px;font-size:5.19px;line-height:6px;color:#222;font-weight:400;">Front Image</span>
<div style="left:300px;top:20px;width:36.8px;height:9.6px;background:linear-gradient(#f3f3f3,#dcdcdc);border:0.6px solid #8e8e8e;border-radius:1.5px;"></div>
<span style="left:312.50px;top:24px;font-size:4.81px;line-height:5px;color:#222;font-weight:400;">Clear</span>
<div style="left:340px;top:19px;width:0.8px;height:13px;background:#b8b8b8;"></div>
<div style="left:509.5px;top:19px;width:0.8px;height:13px;background:#b8b8b8;"></div>
<div style="left:19.5px;top:32.9px;width:786.5px;height:10.8px;background:linear-gradient(#868686,#9a9a9a);"></div>
<div style="left:19.5px;top:43.2px;width:786.5px;height:0.6px;background:#7a7a7a;"></div>
<div style="left:19.5px;top:34px;width:181px;height:9.7px;background:linear-gradient(#e0e0e0,#d4d4d4);border-right:0.6px solid #666;"></div>
<span style="left:23.80px;top:36px;font-size:5.54px;line-height:6px;color:#1e1e1e;font-weight:700;">Ash of Ambitions Lulu Cover WIP.psd @ 25% (Layer 1, RGB/8) *</span>
<div style="left:193.3px;top:36.3px;width:5.6px;height:5.4px;background:#c2c2c2;border:0.5px solid #8a8a8a;"></div>
<span style="left:194.80px;top:37px;font-size:4.60px;line-height:5px;color:#444;font-weight:700;">x</span>
<span style="left:206.25px;top:36px;font-size:5.48px;line-height:6px;color:#2a2a2a;font-weight:700;">BookCover5x8_Cream_240.png @ 16.7% (Ash-of-Ambitions-Lulu-Cover-WIP-7, RGB/8) *</span>
<div style="left:438.3px;top:36.3px;width:5.6px;height:5.4px;background:#c2c2c2;border:0.5px solid #8a8a8a;"></div>
<span style="left:439.80px;top:37px;font-size:4.60px;line-height:5px;color:#444;font-weight:700;">x</span>
<div style="left:446px;top:34.3px;width:0.7px;height:9.4px;background:#6a6a6a;"></div>
<span style="left:452.00px;top:36px;font-size:5.51px;line-height:6px;color:#2a2a2a;font-weight:700;">Book Cover LULU Tut @ 100% (Layer 2, RGB/8) *</span>
<div style="left:581.3px;top:36.3px;width:5.6px;height:5.4px;background:#c2c2c2;border:0.5px solid #8a8a8a;"></div>
<span style="left:582.80px;top:37px;font-size:4.60px;line-height:5px;color:#444;font-weight:700;">x</span>
<div style="left:588.5px;top:34.3px;width:0.7px;height:9.4px;background:#6a6a6a;"></div>
<div style="left:589.2px;top:32.9px;width:217px;height:10.3px;background:linear-gradient(#7c7c7c,#8a8a8a);"></div>
<div style="left:-6px;top:32.9px;width:25.5px;height:552.1px;background:#5c5c5c;"></div>
<div style="left:-6px;top:32.9px;width:25.2px;height:7px;background:linear-gradient(#3a3a3a,#555);"></div>
<svg style="left:2px;top:34.9px;" width="6" height="4" viewBox="0 0 6 4"><path d="M0.8 0.6 L2.2 2 L0.8 3.4 M2.8 0.6 L4.2 2 L2.8 3.4" stroke="#ddd" stroke-width="0.7" fill="none"/></svg>
<div style="left:0.8px;top:40px;width:18px;height:284.2px;background:#d8d8d8;border-right:0.7px solid #9a9a9a;border-bottom:0.7px solid #8a8a8a;"></div>
<div style="left:-6px;top:40px;width:6.9px;height:284.2px;background:#b0b0b0;"></div>
<div style="left:-6px;top:324.2px;width:6.9px;height:260px;background:#787878;"></div>
<div style="left:4px;top:43.2px;width:11px;height:0.6px;background:#c6c6c6;"></div>
<div style="left:4px;top:44.6px;width:11px;height:0.6px;background:#cdcdcd;"></div>
<div style="left:2.5px;top:116.8px;width:14.5px;height:0.7px;background:#b9b9b9;"></div>
<div style="left:2.5px;top:117.5px;width:14.5px;height:0.6px;background:#eaeaea;"></div>
<div style="left:2.5px;top:210.8px;width:14.5px;height:0.7px;background:#b9b9b9;"></div>
<div style="left:2.5px;top:211.5px;width:14.5px;height:0.6px;background:#eaeaea;"></div>
<div style="left:2.5px;top:258.8px;width:14.5px;height:0.7px;background:#b9b9b9;"></div>
<div style="left:2.5px;top:259.5px;width:14.5px;height:0.6px;background:#eaeaea;"></div>
<svg style="left:0px;top:45.599999999999994px;" width="19" height="13" viewBox="0 0 19 13"><g transform="translate(9.5 6.5) scale(0.88) translate(-9.5 -6.5)"><path d="M4.9 2.6 V8.2 L6.4 6.9 L8.7 6.5 Z" fill="#2a2a2a"/><path d="M12.4 5.4 V9.4 M10.4 7.4 H14.4" stroke="#2a2a2a" stroke-width="0.9"/><path d="M12.4 4.7 l-1.1 1.3h2.2z M12.4 10.1 l-1.1 -1.3h2.2z M9.7 7.4 l1.3 -1.1v2.2z M15.1 7.4 l-1.3 -1.1v2.2z" fill="#2a2a2a"/></g></svg>
<svg style="left:0px;top:57.5px;" width="19" height="13" viewBox="0 0 19 13"><g transform="translate(9.5 6.5) scale(0.88) translate(-9.5 -6.5)"><rect x="5.4" y="2.4" width="8" height="7.6" fill="none" stroke="#2a2a2a" stroke-width="0.9" stroke-dasharray="1.5 1.05"/><path d="M15.2 10.6 h1.8 v-1.8z" fill="#222" transform="translate(0,1.2)"/></g></svg>
<svg style="left:0px;top:68.89999999999999px;" width="19" height="13" viewBox="0 0 19 13"><g transform="translate(9.5 6.5) scale(0.88) translate(-9.5 -6.5)"><path d="M4.8 1.8 L8.6 4.6 L13.4 2 L12.6 8.4 L8 7.2 L6.6 10.6 Z" fill="#bbb" stroke="#2a2a2a" stroke-width="1"/><path d="M15.2 10.6 h1.8 v-1.8z" fill="#222" transform="translate(0,1.2)"/></g></svg>
<svg style="left:0px;top:79.8px;" width="19" height="13" viewBox="0 0 19 13"><g transform="translate(9.5 6.5) scale(0.88) translate(-9.5 -6.5)"><ellipse cx="7" cy="7.6" rx="2.8" ry="2.6" fill="none" stroke="#555" stroke-width="0.7" stroke-dasharray="1 0.8"/><path d="M8 7.6 L13.4 2.8" stroke="#444" stroke-width="1.3" stroke-linecap="round"/><path d="M6.2 9.2 L8.6 7" stroke="#111" stroke-width="2.2" stroke-linecap="round"/><path d="M15.2 10.6 h1.8 v-1.8z" fill="#222" transform="translate(0,1.2)"/></g></svg>
<div style="left:3.1px;top:92.4px;width:13.5px;height:11.6px;background:#c4c4c4;border:0.9px solid #4a4a4a;border-radius:1.5px;box-shadow:inset 0.6px 0.6px 1px rgba(0,0,0,.35);"></div>
<svg style="left:0px;top:91.2px;" width="19" height="13" viewBox="0 0 19 13"><g transform="translate(9.5 6.5) scale(0.88) translate(-9.5 -6.5)"><path d="M7.4 2.8 V8.6 H13.2 M5.4 4.7 H11.2 V10.6" fill="none" stroke="#1a1a1a" stroke-width="1.4"/><path d="M15.2 10.6 h1.8 v-1.8z" fill="#222" transform="translate(0,1.2)"/></g></svg>
<svg style="left:0px;top:103.6px;" width="19" height="13" viewBox="0 0 19 13"><g transform="translate(9.5 6.5) scale(0.88) translate(-9.5 -6.5)"><path d="M5 10.6 L6 8.2 L10.4 3.8 L12 5.4 L7.6 9.8 Z" fill="#999" stroke="#2a2a2a" stroke-width="0.7"/><path d="M10 3 L13 6 M11.4 4.4 L13.6 2.2" stroke="#111" stroke-width="2" stroke-linecap="round"/><path d="M15.2 10.6 h1.8 v-1.8z" fill="#222" transform="translate(0,1.2)"/></g></svg>
<svg style="left:0px;top:116.6px;" width="19" height="13" viewBox="0 0 19 13"><g transform="translate(9.5 6.5) scale(0.88) translate(-9.5 -6.5)"><g transform="rotate(-42 9.5 6.5)"><rect x="3.2" y="4.3" width="12.6" height="4.6" rx="2.3" fill="#555" stroke="#2a2a2a" stroke-width="0.8"/><rect x="7.6" y="4.3" width="3.8" height="4.6" fill="#ddd"/></g><path d="M15.2 10.6 h1.8 v-1.8z" fill="#222" transform="translate(0,1.2)"/></g></svg>
<svg style="left:0px;top:128.5px;" width="19" height="13" viewBox="0 0 19 13"><g transform="translate(9.5 6.5) scale(0.88) translate(-9.5 -6.5)"><path d="M13.8 2.2 L8.4 6.6 L9.8 8 Z" fill="#2a2a2a"/><path d="M4.6 10.4 C5.6 10.2 5.6 8.2 7.6 7.2 L9.2 8.8 C8.4 10.6 6 11 4.6 10.4Z" fill="#111"/><path d="M15.2 10.6 h1.8 v-1.8z" fill="#222" transform="translate(0,1.2)"/></g></svg>
<svg style="left:0px;top:139.9px;" width="19" height="13" viewBox="0 0 19 13"><g transform="translate(9.5 6.5) scale(0.88) translate(-9.5 -6.5)"><path d="M7.9 1.8 h3.2 v2.2 l-0.7 2.4 h3.1 v2.6 h-8 v-2.6 h3.1 l-0.7 -2.4z" fill="#2a2a2a"/><rect x="5" y="9.6" width="9" height="1.3" fill="#111"/><path d="M15.2 10.6 h1.8 v-1.8z" fill="#222" transform="translate(0,1.2)"/></g></svg>
<svg style="left:0px;top:151.3px;" width="19" height="13" viewBox="0 0 19 13"><g transform="translate(9.5 6.5) scale(0.88) translate(-9.5 -6.5)"><path d="M13.8 2.2 L9 6.2 L10.2 7.4 Z" fill="#2a2a2a"/><path d="M5.2 10 C6.2 9.8 6.2 8 8 7 L9.6 8.6 C8.8 10.2 6.6 10.6 5.2 10Z" fill="#111"/><path d="M4.4 5.6 A3.2 3.2 0 0 1 9.6 3.2" fill="none" stroke="#444" stroke-width="0.9"/><path d="M3.6 4.4 l0.4 2.2 l2 -0.8z" fill="#333"/><path d="M15.2 10.6 h1.8 v-1.8z" fill="#222" transform="translate(0,1.2)"/></g></svg>
<svg style="left:0px;top:163.20000000000002px;" width="19" height="13" viewBox="0 0 19 13"><g transform="translate(9.5 6.5) scale(0.88) translate(-9.5 -6.5)"><g transform="rotate(-38 9.5 6.5)"><rect x="3.6" y="4.2" width="11.6" height="4.8" rx="0.8" fill="#666" stroke="#2a2a2a" stroke-width="0.8"/><rect x="3.6" y="4.2" width="4.2" height="4.8" fill="#222"/></g><path d="M15.2 10.6 h1.8 v-1.8z" fill="#222" transform="translate(0,1.2)"/></g></svg>
<svg style="left:0px;top:174.60000000000002px;" width="19" height="13" viewBox="0 0 19 13"><g transform="translate(9.5 6.5) scale(0.88) translate(-9.5 -6.5)"><path d="M6 5.4 L9.6 2.6 L13.2 7 L9 10.4 Z" fill="#888" stroke="#2a2a2a" stroke-width="0.9"/><path d="M5.8 5.6 C4 6.6 3.8 9 4.6 10.6 C5.6 9.4 6 8 6.6 6.6Z" fill="#111"/><path d="M8.2 1.2 C6.6 2 7.4 4.4 9 5.6" fill="none" stroke="#2a2a2a" stroke-width="0.8"/><path d="M15.2 10.6 h1.8 v-1.8z" fill="#222" transform="translate(0,1.2)"/></g></svg>
<svg style="left:0px;top:186.5px;" width="19" height="13" viewBox="0 0 19 13"><g transform="translate(9.5 6.5) scale(0.88) translate(-9.5 -6.5)"><path d="M9.4 1.8 C11 4.6 12.8 6 12.8 8 A3.4 3.4 0 0 1 6 8 C6 6 7.8 4.6 9.4 1.8Z" fill="#b8b8b8" stroke="#2a2a2a" stroke-width="0.9"/><path d="M15.2 10.6 h1.8 v-1.8z" fill="#222" transform="translate(0,1.2)"/></g></svg>
<svg style="left:0px;top:197.9px;" width="19" height="13" viewBox="0 0 19 13"><g transform="translate(9.5 6.5) scale(0.88) translate(-9.5 -6.5)"><ellipse cx="8" cy="5.6" rx="3.6" ry="3" fill="#c8c8c8" stroke="#2a2a2a" stroke-width="0.9" transform="rotate(-20 8 5.6)"/><path d="M10.6 8 C12 9.6 13.6 9.2 14.6 7.4" fill="none" stroke="#2a2a2a" stroke-width="1.1"/><path d="M15.2 10.6 h1.8 v-1.8z" fill="#222" transform="translate(0,1.2)"/></g></svg>
<svg style="left:0px;top:210.9px;" width="19" height="13" viewBox="0 0 19 13"><g transform="translate(9.5 6.5) scale(0.88) translate(-9.5 -6.5)"><path d="M5 10.8 L6 6.4 L9.6 3.6 L12.6 6.6 L9.6 10 Z" fill="#aaa" stroke="#2a2a2a" stroke-width="0.9"/><path d="M10 3 L13.2 6.2 L14.4 5 L11.2 1.8Z" fill="#222"/><path d="M5 10.8 L8.4 7.4" stroke="#2a2a2a" stroke-width="0.6"/><path d="M15.2 10.6 h1.8 v-1.8z" fill="#222" transform="translate(0,1.2)"/></g></svg>
<svg style="left:0px;top:222.8px;" width="19" height="13" viewBox="0 0 19 13"><g transform="translate(9.5 6.5) scale(0.88) translate(-9.5 -6.5)"><path d="M5.6 2.2 H13.4 V4.2 H12.6 L12.2 3.2 H10.3 V9.8 L11.4 10.2 V10.9 H7.6 V10.2 L8.7 9.8 V3.2 H6.8 L6.4 4.2 H5.6Z" fill="#1c1c1c"/><path d="M15.2 10.6 h1.8 v-1.8z" fill="#222" transform="translate(0,1.2)"/></g></svg>
<svg style="left:0px;top:234.70000000000002px;" width="19" height="13" viewBox="0 0 19 13"><g transform="translate(9.5 6.5) scale(0.88) translate(-9.5 -6.5)"><path d="M6.4 1.8 V10 L8.4 8.2 L9.8 11.2 L11 10.6 L9.6 7.8 L12.2 7.6 Z" fill="#f4f4f4" stroke="#222" stroke-width="0.9"/><path d="M15.2 10.6 h1.8 v-1.8z" fill="#222" transform="translate(0,1.2)"/></g></svg>
<svg style="left:0px;top:246.10000000000002px;" width="19" height="13" viewBox="0 0 19 13"><g transform="translate(9.5 6.5) scale(0.88) translate(-9.5 -6.5)"><rect x="4.8" y="2.6" width="9.2" height="7.6" rx="1.8" fill="#9a9a9a" stroke="#444" stroke-width="0.9"/><path d="M15.2 10.6 h1.8 v-1.8z" fill="#222" transform="translate(0,1.2)"/></g></svg>
<svg style="left:0px;top:259.1px;" width="19" height="13" viewBox="0 0 19 13"><g transform="translate(9.5 6.5) scale(0.88) translate(-9.5 -6.5)"><path d="M6.6 10.8 C5.6 9 4.6 7.8 4.8 7 C5.4 6.4 6.2 7 6.8 7.8 V3.6 C7 2.8 7.9 2.8 8 3.6 V2.8 C8.2 2 9.2 2 9.4 2.8 V3.2 C9.6 2.5 10.6 2.6 10.7 3.4 V4.2 C11 3.6 11.9 3.8 11.9 4.6 V8 C11.9 9.4 11.4 10 11 10.8Z" fill="#e4e4e4" stroke="#222" stroke-width="0.8"/><path d="M15.2 10.6 h1.8 v-1.8z" fill="#222" transform="translate(0,1.2)"/></g></svg>
<svg style="left:0px;top:270.5px;" width="19" height="13" viewBox="0 0 19 13"><g transform="translate(9.5 6.5) scale(0.88) translate(-9.5 -6.5)"><circle cx="8.4" cy="5.6" r="3.1" fill="#e6e6e6" stroke="#222" stroke-width="1.1"/><path d="M10.6 7.8 L13.6 10.8" stroke="#222" stroke-width="1.7" stroke-linecap="round"/></g></svg>
<div style="left:3.2px;top:286.4px;width:3px;height:3px;background:#111;"></div>
<div style="left:4.8px;top:288px;width:3px;height:3px;background:#e8e8e8;border:0.5px solid #222;"></div>
<svg style="left:11px;top:285.5px;" width="7" height="7" viewBox="0 0 7 7"><path d="M1.2 2 H4.6 V5.4" fill="none" stroke="#222" stroke-width="0.9"/><path d="M0.4 2 l1.6 -1.3 v2.6z M4.6 6.4 l-1.3 -1.6 h2.6z" fill="#222"/></svg>
<div style="left:7.8px;top:299px;width:9px;height:8.4px;background:#0a0a0a;border:0.5px solid #eee;"></div>
<div style="left:3.4px;top:294.3px;width:7.9px;height:7.8px;background:#c6cbd8;border:0.5px solid #d8d8d8;"></div>
<div style="left:5.4px;top:312.2px;width:8.4px;height:6px;background:#f8f8f8;border:0.6px solid #666;border-right:1px solid #333;border-bottom:1px solid #333;"></div>
<svg style="left:5.4px;top:312.2px;" width="9" height="6" viewBox="0 0 9 6"><circle cx="4.2" cy="2.9" r="1.6" fill="none" stroke="#555" stroke-width="0.6" stroke-dasharray="0.8 0.6"/></svg>
<div style="left:597px;top:35.8px;width:192.5px;height:6.6px;background:linear-gradient(#2e2e2e,#4e4e4e);border-radius:2px 2px 0 0;"></div>
<svg style="left:606px;top:37px;" width="7" height="4" viewBox="0 0 7 4"><path d="M2.2 0.6 L0.8 2 L2.2 3.4 M4.2 0.6 L2.8 2 L4.2 3.4" stroke="#ddd" stroke-width="0.7" fill="none"/></svg>
<svg style="left:775.4px;top:37.2px;" width="8" height="4" viewBox="0 0 8 4"><path d="M2 0.7 L0.8 1.9 L2 3.1 M4 0.7 L2.8 1.9 L4 3.1" stroke="#e4e4e4" stroke-width="0.8" fill="none"/></svg>
<svg style="left:783.4px;top:37.2px;" width="6" height="4" viewBox="0 0 6 4"><path d="M1 0.6 L3.6 3.2 M3.6 0.6 L1 3.2" stroke="#f0f0f0" stroke-width="1"/></svg>
<div style="left:597px;top:42.4px;width:18.6px;height:95px;background:#d4d4d4;border-left:0.8px solid #777;border-bottom:0.8px solid #777;"></div>
<div style="left:598.5px;top:64px;width:16px;height:0.7px;background:#a8a8a8;"></div>
<div style="left:598.5px;top:64.7px;width:16px;height:0.6px;background:#ececec;"></div>
<div style="left:598.5px;top:85.5px;width:16px;height:0.7px;background:#a8a8a8;"></div>
<div style="left:598.5px;top:86.2px;width:16px;height:0.6px;background:#ececec;"></div>
<div style="left:601.5px;top:45.5px;width:10px;height:0.5px;background:#bcbcbc;"></div>
<div style="left:601.5px;top:46.7px;width:10px;height:0.5px;background:#bcbcbc;"></div>
<div style="left:601.5px;top:67.5px;width:10px;height:0.5px;background:#bcbcbc;"></div>
<div style="left:601.5px;top:68.7px;width:10px;height:0.5px;background:#bcbcbc;"></div>
<div style="left:601.5px;top:89px;width:10px;height:0.5px;background:#bcbcbc;"></div>
<div style="left:601.5px;top:90.2px;width:10px;height:0.5px;background:#bcbcbc;"></div>
<svg style="left:601px;top:50.5px;" width="11" height="11" viewBox="0 0 11 11"><rect x="1" y="1.2" width="8.6" height="7.6" fill="#6a6a6a" stroke="#3c3c3c" stroke-width="0.7"/><rect x="1.8" y="2" width="7" height="2.2" fill="#b4b4b4"/><text x="2.2" y="8" font-size="3.6" font-weight="700" fill="#eee" font-family="Liberation Sans, sans-serif">Mb</text></svg>
<svg style="left:601px;top:72px;" width="11" height="11" viewBox="0 0 11 11"><rect x="1" y="1.6" width="8.8" height="6.8" fill="#666" stroke="#444" stroke-width="0.7"/><circle cx="5" cy="5" r="2.1" fill="#f2f2f2"/></svg>
<svg style="left:601px;top:93.8px;" width="11" height="11" viewBox="0 0 11 11"><path d="M1 2.4 H9.6 M1 6.6 H9.6" stroke="#555" stroke-width="0.9"/><rect x="2" y="1.2" width="3" height="2.4" fill="#222"/><rect x="6.4" y="5.2" width="2.6" height="2.8" fill="#888" stroke="#333" stroke-width="0.5"/></svg>
<svg style="left:601px;top:108.6px;" width="11" height="11" viewBox="0 0 11 11"><circle cx="5.6" cy="2.2" r="1.2" fill="#222"/><path d="M5.6 3 V6 M3.4 4.4 L5.6 6 L7.8 4.4" stroke="#222" stroke-width="0.9" fill="none"/><rect x="3.6" y="6.4" width="4" height="3.4" fill="#ddd" stroke="#222" stroke-width="0.8"/></svg>
<svg style="left:601px;top:123.6px;" width="11" height="11" viewBox="0 0 11 11"><rect x="1.4" y="1" width="4.4" height="5" fill="#bbb" stroke="#555" stroke-width="0.6"/><path d="M5.6 3 h2.6 v2 l-0.5 1.6 h2 v1.6 h-6.6 v-1.6 h2 l-0.5 -1.6z" fill="#333"/><rect x="3" y="9" width="7" height="1" fill="#222"/></svg>
<div style="left:615.5px;top:42.4px;width:174px;height:520.2px;background:#d6d6d6;border-left:0.8px solid #6e6e6e;border-right:0.8px solid #6e6e6e;border-bottom:1.4px solid #6c6c6c;"></div>
<div style="left:616.3px;top:42.4px;width:172.4px;height:8.3px;background:linear-gradient(#a6a6a6,#9a9a9a);border-bottom:0.6px solid #777;"></div>
<svg style="left:779px;top:44.1px;" width="10" height="6" viewBox="0 0 10 6"><path d="M0.8 1.6 h2.6 l-1.3 1.7z" fill="#333"/><path d="M4.6 1 H8.6 M4.6 2.6 H8.6 M4.6 4.2 H8.6" stroke="#444" stroke-width="0.7"/></svg>
<div style="left:616.3px;top:42.4px;width:35.700000000000045px;height:8.600000000000001px;background:linear-gradient(#e4e4e4,#d8d8d8);border-right:0.6px solid #777;"></div>
<span style="left:619.50px;top:44px;font-size:5.14px;line-height:6px;color:#1a1a1a;font-weight:700;">NAVIGATOR</span>
<div style="left:689.9px;top:42.4px;width:0.6px;height:8.3px;background:#7c7c7c;"></div>
<span style="left:655.00px;top:44px;font-size:5.25px;line-height:6px;color:#3a3a3a;font-weight:700;">HISTOGRAM</span>
<div style="left:624px;top:53.9px;width:156.4px;height:110.9px;background:#e5392b;"></div>
<div style="left:626.1px;top:55.5px;width:152.40px;height:108.08px;background:#09090b;overflow:hidden">
<div style="left:86.62px;top:0;width:65.78px;height:108.08px;background:#536171"></div>
<div style="left:90.67px;top:5.51px;width:56.06px;height:96.78px;background:#0a0a0c"></div>
<svg style="left:110.91px;top:6.07px" width="16.19" height="8.91" viewBox="0 0 40 22"><path d="M4.2 11 C5 0.5 33 0.5 33.8 11" fill="none" stroke="#e0901f" stroke-width="2.6"/></svg>
<span style="left:113.34px;top:8.66px;font-size:4.80px;line-height:5.76px;color:#1c79ba;font-weight:700">Lulu</span>
<span style="left:111.72px;top:16.48px;font-size:2.90px;line-height:3.48px;color:#c98a34;font-weight:700">Front Cover</span>
<div style="left:114.55px;top:59.04px;width:34.41px;height:0.6px;background:#1c2556"></div>
<span style="left:122.65px;top:55.13px;font-size:2.70px;line-height:3.24px;color:#38587e;font-weight:700">3.75" x 6.37"</span>
<span style="left:119.82px;top:60.47px;font-size:2.70px;line-height:3.24px;color:#38587e;font-weight:700">9.53cm x 16.18cm</span>
<span style="left:105.24px;top:58.20px;font-size:1.90px;line-height:2.28px;color:#2a4a70;font-weight:400">Live Area</span>
<div style="left:114.55px;top:76.33px;width:34.41px;height:0.6px;background:#1c2556"></div>
<span style="left:122.65px;top:72.41px;font-size:2.70px;line-height:3.24px;color:#38587e;font-weight:700">4.25" x 6.87"</span>
<span style="left:119.82px;top:77.76px;font-size:2.70px;line-height:3.24px;color:#38587e;font-weight:700">10.8cm x 17.45cm</span>
<span style="left:104.84px;top:75.49px;font-size:1.90px;line-height:2.28px;color:#2a4a70;font-weight:400">Trim Area</span>
<div style="left:114.55px;top:93.69px;width:34.41px;height:0.6px;background:#1c2556"></div>
<span style="left:122.65px;top:89.78px;font-size:2.70px;line-height:3.24px;color:#38587e;font-weight:700">4.375" x 7.125"</span>
<span style="left:119.82px;top:95.12px;font-size:2.70px;line-height:3.24px;color:#38587e;font-weight:700">11.11cm x 18.1cm</span>
<span style="left:101.20px;top:92.85px;font-size:1.90px;line-height:2.28px;color:#2a4a70;font-weight:400">Document Size</span>
</div>
<div style="left:616.3px;top:167.3px;width:30px;height:7.4px;background:#fbfbfb;border:0.5px solid #c8c8c8;"></div>
<span style="left:619.50px;top:169px;font-size:4.80px;line-height:5px;color:#222;font-weight:400;">25%</span>
<svg style="left:718px;top:168px;" width="8" height="6" viewBox="0 0 8 6"><path d="M0.8 5 L3 2.2 L4.4 3.8 L5.2 3 L6.8 5Z" fill="#444"/></svg>
<div style="left:727px;top:171.2px;width:38px;height:0.7px;background:#999;"></div>
<div style="left:727px;top:171.9px;width:38px;height:0.6px;background:#f0f0f0;"></div>
<svg style="left:740.5px;top:167.8px;" width="6" height="7" viewBox="0 0 6 7"><path d="M1 0.8 H4.6 V4 L2.8 5.8 L1 4Z" fill="#e8e8e8" stroke="#555" stroke-width="0.6"/></svg>
<svg style="left:768px;top:167px;" width="12" height="7" viewBox="0 0 12 7"><path d="M0.8 6 L4 1.6 L6.2 4.2 L7.6 2.8 L10.6 6Z" fill="#444"/></svg>
<svg style="left:781.5px;top:168.5px;" width="6" height="6" viewBox="0 0 6 6"><path d="M5 1 L1 5 M5 3 L3 5" stroke="#999" stroke-width="0.6"/></svg>
<div style="left:616.3px;top:175.2px;width:172.4px;height:1.6px;background:#6a6a6a;"></div>
<div style="left:616.3px;top:176.6px;width:172.4px;height:8.8px;background:linear-gradient(#a6a6a6,#9a9a9a);border-bottom:0.6px solid #777;"></div>
<svg style="left:779px;top:178.29999999999998px;" width="10" height="6" viewBox="0 0 10 6"><path d="M0.8 1.6 h2.6 l-1.3 1.7z" fill="#333"/><path d="M4.6 1 H8.6 M4.6 2.6 H8.6 M4.6 4.2 H8.6" stroke="#444" stroke-width="0.7"/></svg>
<div style="left:616.3px;top:176.6px;width:28.200000000000045px;height:9.100000000000001px;background:linear-gradient(#e4e4e4,#d8d8d8);border-right:0.6px solid #777;"></div>
<span style="left:619.30px;top:179px;font-size:4.94px;line-height:5px;color:#1a1a1a;font-weight:700;">HISTORY</span>
<div style="left:616.3px;top:185.3px;width:165px;height:16.2px;background:#dedede;"></div>
<div style="left:617.8px;top:188.3px;width:8.2px;height:8.6px;background:#e4e4e4;border:0.5px solid #cdcdcd;"></div>
<div style="left:629.5px;top:187.4px;width:15.8px;height:12.4px;background:#fff;border:0.6px solid #555;background-image:linear-gradient(45deg,#d8d8d8 25%,transparent 25%,transparent 75%,#d8d8d8 75%),linear-gradient(45deg,#d8d8d8 25%,transparent 25%,transparent 75%,#d8d8d8 75%);background-size:4px 4px;background-position:0 0,2px 2px;"></div>
<span style="left:647.50px;top:190px;font-size:5.18px;line-height:6px;color:#111;font-weight:400;-webkit-text-stroke:0.12px #111;">Ash of Ambitions Lulu Cover WIP</span>
<div style="left:616.3px;top:200.8px;width:165px;height:1.4px;background:#8e8e8e;"></div>
<div style="left:616.3px;top:202.70000000000002px;width:165px;height:9.4px;background:#dcdcdc;"></div>
<div style="left:616.3px;top:212.0px;width:165px;height:0.8px;background:#b0b0b0;"></div>
<div style="left:617.8px;top:203.10000000000002px;width:8.2px;height:8.4px;background:#e2e2e2;border:0.5px solid #cdcdcd;"></div>
<svg style="left:631.5px;top:202.8px;" width="9" height="9" viewBox="0 0 9 9"><path d="M1 2.2 V8 H7.8 V2.8 H5.4 V1.3 H1.6Z" fill="#e9e9e9" stroke="#555" stroke-width="0.8"/><path d="M1.4 3 H7.4" stroke="#777" stroke-width="0.6"/><path d="M2.2 4.4 H6.6 M2.2 5.8 H5.4" stroke="#fafafa" stroke-width="0.7"/><rect x="6" y="6" width="2.6" height="2.7" fill="#0c0c0c"/></svg>
<span style="left:645.20px;top:204px;font-size:5.05px;line-height:6px;color:#111;font-weight:400;-webkit-text-stroke:0.12px #111;">Create Clipping Mask</span>
<div style="left:616.3px;top:212.70000000000002px;width:165px;height:9.4px;background:#dcdcdc;"></div>
<div style="left:616.3px;top:222.0px;width:165px;height:0.8px;background:#b0b0b0;"></div>
<div style="left:617.8px;top:213.10000000000002px;width:8.2px;height:8.4px;background:#e2e2e2;border:0.5px solid #cdcdcd;"></div>
<svg style="left:631.5px;top:212.8px;" width="9" height="9" viewBox="0 0 9 9"><path d="M1 2.2 V8 H7.8 V2.8 H5.4 V1.3 H1.6Z" fill="#e9e9e9" stroke="#555" stroke-width="0.8"/><path d="M1.4 3 H7.4" stroke="#777" stroke-width="0.6"/><path d="M2.2 4.4 H6.6 M2.2 5.8 H5.4" stroke="#fafafa" stroke-width="0.7"/><rect x="6" y="6" width="2.6" height="2.7" fill="#0c0c0c"/></svg>
<span style="left:645.20px;top:214px;font-size:5.05px;line-height:6px;color:#111;font-weight:400;-webkit-text-stroke:0.12px #111;">Paste</span>
<div style="left:616.3px;top:222.70000000000002px;width:165px;height:9.4px;background:#dcdcdc;"></div>
<div style="left:616.3px;top:232.0px;width:165px;height:0.8px;background:#b0b0b0;"></div>
<div style="left:617.8px;top:223.10000000000002px;width:8.2px;height:8.4px;background:#e2e2e2;border:0.5px solid #cdcdcd;"></div>
<svg style="left:631.5px;top:222.8px;" width="9" height="9" viewBox="0 0 9 9"><path d="M1 2.2 V8 H7.8 V2.8 H5.4 V1.3 H1.6Z" fill="#e9e9e9" stroke="#555" stroke-width="0.8"/><path d="M1.4 3 H7.4" stroke="#777" stroke-width="0.6"/><path d="M2.2 4.4 H6.6 M2.2 5.8 H5.4" stroke="#fafafa" stroke-width="0.7"/><rect x="6" y="6" width="2.6" height="2.7" fill="#0c0c0c"/></svg>
<span style="left:645.20px;top:224px;font-size:5.05px;line-height:6px;color:#111;font-weight:400;-webkit-text-stroke:0.12px #111;">Free Transform</span>
<div style="left:616.3px;top:232.70000000000002px;width:165px;height:9.4px;background:#dcdcdc;"></div>
<div style="left:616.3px;top:242.0px;width:165px;height:0.8px;background:#b0b0b0;"></div>
<div style="left:617.8px;top:233.10000000000002px;width:8.2px;height:8.4px;background:#e2e2e2;border:0.5px solid #cdcdcd;"></div>
<svg style="left:631.5px;top:232.8px;" width="9" height="9" viewBox="0 0 9 9"><path d="M1 2.2 V8 H7.8 V2.8 H5.4 V1.3 H1.6Z" fill="#e9e9e9" stroke="#555" stroke-width="0.8"/><path d="M1.4 3 H7.4" stroke="#777" stroke-width="0.6"/><path d="M2.2 4.4 H6.6 M2.2 5.8 H5.4" stroke="#fafafa" stroke-width="0.7"/><rect x="6" y="6" width="2.6" height="2.7" fill="#0c0c0c"/></svg>
<span style="left:645.20px;top:234px;font-size:5.05px;line-height:6px;color:#111;font-weight:400;-webkit-text-stroke:0.12px #111;">Release Clipping Mask</span>
<div style="left:616.3px;top:242.70000000000002px;width:165px;height:9.4px;background:#dcdcdc;"></div>
<div style="left:616.3px;top:252.0px;width:165px;height:0.8px;background:#b0b0b0;"></div>
<div style="left:617.8px;top:243.10000000000002px;width:8.2px;height:8.4px;background:#e2e2e2;border:0.5px solid #cdcdcd;"></div>
<svg style="left:631.5px;top:242.8px;" width="9" height="9" viewBox="0 0 9 9"><path d="M1 2.2 V8 H7.8 V2.8 H5.4 V1.3 H1.6Z" fill="#e9e9e9" stroke="#555" stroke-width="0.8"/><path d="M1.4 3 H7.4" stroke="#777" stroke-width="0.6"/><path d="M2.2 4.4 H6.6 M2.2 5.8 H5.4" stroke="#fafafa" stroke-width="0.7"/><rect x="6" y="6" width="2.6" height="2.7" fill="#0c0c0c"/></svg>
<span style="left:645.20px;top:244px;font-size:5.05px;line-height:6px;color:#111;font-weight:400;-webkit-text-stroke:0.12px #111;">Free Transform</span>
<div style="left:616.3px;top:252.70000000000002px;width:165px;height:9.4px;background:#dcdcdc;"></div>
<div style="left:616.3px;top:262.0px;width:165px;height:0.8px;background:#b0b0b0;"></div>
<div style="left:617.8px;top:253.10000000000002px;width:8.2px;height:8.4px;background:#e2e2e2;border:0.5px solid #cdcdcd;"></div>
<svg style="left:631.5px;top:252.8px;" width="9" height="9" viewBox="0 0 9 9"><path d="M1 2.2 V8 H7.8 V2.8 H5.4 V1.3 H1.6Z" fill="#e9e9e9" stroke="#555" stroke-width="0.8"/><path d="M1.4 3 H7.4" stroke="#777" stroke-width="0.6"/><path d="M2.2 4.4 H6.6 M2.2 5.8 H5.4" stroke="#fafafa" stroke-width="0.7"/><rect x="6" y="6" width="2.6" height="2.7" fill="#0c0c0c"/></svg>
<span style="left:645.20px;top:254px;font-size:5.05px;line-height:6px;color:#111;font-weight:400;-webkit-text-stroke:0.12px #111;">Layer Style</span>
<div style="left:616.3px;top:262.7px;width:165px;height:9.4px;background:#dcdcdc;"></div>
<div style="left:616.3px;top:272.0px;width:165px;height:0.8px;background:#b0b0b0;"></div>
<div style="left:617.8px;top:263.1px;width:8.2px;height:8.4px;background:#e2e2e2;border:0.5px solid #cdcdcd;"></div>
<svg style="left:631.5px;top:262.8px;" width="9" height="9" viewBox="0 0 9 9"><path d="M1 2.2 V8 H7.8 V2.8 H5.4 V1.3 H1.6Z" fill="#e9e9e9" stroke="#555" stroke-width="0.8"/><path d="M1.4 3 H7.4" stroke="#777" stroke-width="0.6"/><path d="M2.2 4.4 H6.6 M2.2 5.8 H5.4" stroke="#fafafa" stroke-width="0.7"/><rect x="6" y="6" width="2.6" height="2.7" fill="#0c0c0c"/></svg>
<span style="left:645.20px;top:264px;font-size:5.05px;line-height:6px;color:#111;font-weight:400;-webkit-text-stroke:0.12px #111;">Disable layer effects</span>
<div style="left:616.3px;top:272.7px;width:165px;height:9.4px;background:#dcdcdc;"></div>
<div style="left:616.3px;top:282.0px;width:165px;height:0.8px;background:#b0b0b0;"></div>
<div style="left:617.8px;top:273.1px;width:8.2px;height:8.4px;background:#e2e2e2;border:0.5px solid #cdcdcd;"></div>
<svg style="left:631.5px;top:272.8px;" width="9" height="9" viewBox="0 0 9 9"><path d="M1 2.2 V8 H7.8 V2.8 H5.4 V1.3 H1.6Z" fill="#e9e9e9" stroke="#555" stroke-width="0.8"/><path d="M1.4 3 H7.4" stroke="#777" stroke-width="0.6"/><path d="M2.2 4.4 H6.6 M2.2 5.8 H5.4" stroke="#fafafa" stroke-width="0.7"/><rect x="6" y="6" width="2.6" height="2.7" fill="#0c0c0c"/></svg>
<span style="left:645.20px;top:274px;font-size:5.05px;line-height:6px;color:#111;font-weight:400;-webkit-text-stroke:0.12px #111;">Enable layer effects</span>
<div style="left:616.3px;top:282.7px;width:165px;height:9.4px;background:#dcdcdc;"></div>
<div style="left:616.3px;top:292.0px;width:165px;height:0.8px;background:#b0b0b0;"></div>
<div style="left:617.8px;top:283.1px;width:8.2px;height:8.4px;background:#e2e2e2;border:0.5px solid #cdcdcd;"></div>
<svg style="left:631.5px;top:282.8px;" width="9" height="9" viewBox="0 0 9 9"><path d="M1 2.2 V8 H7.8 V2.8 H5.4 V1.3 H1.6Z" fill="#e9e9e9" stroke="#555" stroke-width="0.8"/><path d="M1.4 3 H7.4" stroke="#777" stroke-width="0.6"/><path d="M2.2 4.4 H6.6 M2.2 5.8 H5.4" stroke="#fafafa" stroke-width="0.7"/><rect x="6" y="6" width="2.6" height="2.7" fill="#0c0c0c"/></svg>
<span style="left:645.20px;top:284px;font-size:5.05px;line-height:6px;color:#111;font-weight:400;-webkit-text-stroke:0.12px #111;">Disable layer effects</span>
<div style="left:616.3px;top:292.7px;width:165px;height:9.4px;background:#dcdcdc;"></div>
<div style="left:616.3px;top:302.0px;width:165px;height:0.8px;background:#b0b0b0;"></div>
<div style="left:617.8px;top:293.1px;width:8.2px;height:8.4px;background:#e2e2e2;border:0.5px solid #cdcdcd;"></div>
<svg style="left:631.5px;top:292.8px;" width="9" height="9" viewBox="0 0 9 9"><path d="M1 2.2 V8 H7.8 V2.8 H5.4 V1.3 H1.6Z" fill="#e9e9e9" stroke="#555" stroke-width="0.8"/><path d="M1.4 3 H7.4" stroke="#777" stroke-width="0.6"/><path d="M2.2 4.4 H6.6 M2.2 5.8 H5.4" stroke="#fafafa" stroke-width="0.7"/><rect x="6" y="6" width="2.6" height="2.7" fill="#0c0c0c"/></svg>
<span style="left:645.20px;top:294px;font-size:5.05px;line-height:6px;color:#111;font-weight:400;-webkit-text-stroke:0.12px #111;">Enable layer effects</span>
<div style="left:616.3px;top:302.7px;width:165px;height:9.4px;background:#dcdcdc;"></div>
<div style="left:616.3px;top:312.0px;width:165px;height:0.8px;background:#b0b0b0;"></div>
<div style="left:617.8px;top:303.1px;width:8.2px;height:8.4px;background:#e2e2e2;border:0.5px solid #cdcdcd;"></div>
<svg style="left:631.5px;top:302.8px;" width="9" height="9" viewBox="0 0 9 9"><path d="M1 2.2 V8 H7.8 V2.8 H5.4 V1.3 H1.6Z" fill="#e9e9e9" stroke="#555" stroke-width="0.8"/><path d="M1.4 3 H7.4" stroke="#777" stroke-width="0.6"/><path d="M2.2 4.4 H6.6 M2.2 5.8 H5.4" stroke="#fafafa" stroke-width="0.7"/><rect x="6" y="6" width="2.6" height="2.7" fill="#0c0c0c"/></svg>
<span style="left:645.20px;top:304px;font-size:5.05px;line-height:6px;color:#111;font-weight:400;-webkit-text-stroke:0.12px #111;">Outer Glow</span>
<div style="left:616.3px;top:312.7px;width:165px;height:9.4px;background:#dcdcdc;"></div>
<div style="left:616.3px;top:322.0px;width:165px;height:0.8px;background:#b0b0b0;"></div>
<div style="left:617.8px;top:313.1px;width:8.2px;height:8.4px;background:#e2e2e2;border:0.5px solid #cdcdcd;"></div>
<svg style="left:631.5px;top:312.8px;" width="9" height="9" viewBox="0 0 9 9"><path d="M1 2.2 V8 H7.8 V2.8 H5.4 V1.3 H1.6Z" fill="#e9e9e9" stroke="#555" stroke-width="0.8"/><path d="M1.4 3 H7.4" stroke="#777" stroke-width="0.6"/><path d="M2.2 4.4 H6.6 M2.2 5.8 H5.4" stroke="#fafafa" stroke-width="0.7"/><rect x="6" y="6" width="2.6" height="2.7" fill="#0c0c0c"/></svg>
<span style="left:645.20px;top:314px;font-size:5.05px;line-height:6px;color:#111;font-weight:400;-webkit-text-stroke:0.12px #111;">Free Transform</span>
<div style="left:616.3px;top:322.7px;width:165px;height:9.4px;background:#dcdcdc;"></div>
<div style="left:616.3px;top:332.0px;width:165px;height:0.8px;background:#b0b0b0;"></div>
<div style="left:617.8px;top:323.1px;width:8.2px;height:8.4px;background:#e2e2e2;border:0.5px solid #cdcdcd;"></div>
<svg style="left:631.5px;top:322.8px;" width="9" height="9" viewBox="0 0 9 9"><path d="M1 2.2 V8 H7.8 V2.8 H5.4 V1.3 H1.6Z" fill="#e9e9e9" stroke="#555" stroke-width="0.8"/><path d="M1.4 3 H7.4" stroke="#777" stroke-width="0.6"/><path d="M2.2 4.4 H6.6 M2.2 5.8 H5.4" stroke="#fafafa" stroke-width="0.7"/><rect x="6" y="6" width="2.6" height="2.7" fill="#0c0c0c"/></svg>
<span style="left:645.20px;top:324px;font-size:5.05px;line-height:6px;color:#111;font-weight:400;-webkit-text-stroke:0.12px #111;">Nudge</span>
<div style="left:616.3px;top:332.7px;width:165px;height:9.4px;background:#dcdcdc;"></div>
<div style="left:616.3px;top:342.0px;width:165px;height:0.8px;background:#b0b0b0;"></div>
<div style="left:617.8px;top:333.1px;width:8.2px;height:8.4px;background:#e2e2e2;border:0.5px solid #cdcdcd;"></div>
<svg style="left:631.5px;top:332.8px;" width="9" height="9" viewBox="0 0 9 9"><path d="M1 2.2 V8 H7.8 V2.8 H5.4 V1.3 H1.6Z" fill="#e9e9e9" stroke="#555" stroke-width="0.8"/><path d="M1.4 3 H7.4" stroke="#777" stroke-width="0.6"/><path d="M2.2 4.4 H6.6 M2.2 5.8 H5.4" stroke="#fafafa" stroke-width="0.7"/><rect x="6" y="6" width="2.6" height="2.7" fill="#0c0c0c"/></svg>
<span style="left:645.20px;top:334px;font-size:5.05px;line-height:6px;color:#111;font-weight:400;-webkit-text-stroke:0.12px #111;">Layer Order</span>
<div style="left:616.3px;top:342.7px;width:165px;height:9.4px;background:#dcdcdc;"></div>
<div style="left:616.3px;top:352.0px;width:165px;height:0.8px;background:#b0b0b0;"></div>
<div style="left:617.8px;top:343.1px;width:8.2px;height:8.4px;background:#e2e2e2;border:0.5px solid #cdcdcd;"></div>
<svg style="left:631.5px;top:342.8px;" width="9" height="9" viewBox="0 0 9 9"><path d="M1 2.2 V8 H7.8 V2.8 H5.4 V1.3 H1.6Z" fill="#e9e9e9" stroke="#555" stroke-width="0.8"/><path d="M1.4 3 H7.4" stroke="#777" stroke-width="0.6"/><path d="M2.2 4.4 H6.6 M2.2 5.8 H5.4" stroke="#fafafa" stroke-width="0.7"/><rect x="6" y="6" width="2.6" height="2.7" fill="#0c0c0c"/></svg>
<span style="left:645.20px;top:344px;font-size:5.05px;line-height:6px;color:#111;font-weight:400;-webkit-text-stroke:0.12px #111;">Create Clipping Mask</span>
<div style="left:616.3px;top:352.7px;width:165px;height:9.4px;background:#dcdcdc;"></div>
<div style="left:616.3px;top:362.0px;width:165px;height:0.8px;background:#b0b0b0;"></div>
<div style="left:617.8px;top:353.1px;width:8.2px;height:8.4px;background:#e2e2e2;border:0.5px solid #cdcdcd;"></div>
<svg style="left:629.5px;top:352.8px;" width="12" height="9" viewBox="0 0 12 9"><path d="M1.6 1 V7 L3.2 5.6 L5.6 5.2 Z" fill="#222"/><path d="M8 2.6 V7.8 M5.4 5.2 H10.6" stroke="#222" stroke-width="0.8"/></svg>
<span style="left:645.20px;top:354px;font-size:5.05px;line-height:6px;color:#111;font-weight:400;-webkit-text-stroke:0.12px #111;">Move</span>
<div style="left:616.3px;top:362.7px;width:165px;height:9.4px;background:#dcdcdc;"></div>
<div style="left:616.3px;top:372.0px;width:165px;height:0.8px;background:#b0b0b0;"></div>
<div style="left:617.8px;top:363.1px;width:8.2px;height:8.4px;background:#e2e2e2;border:0.5px solid #cdcdcd;"></div>
<svg style="left:631.5px;top:362.8px;" width="9" height="9" viewBox="0 0 9 9"><path d="M1 2.2 V8 H7.8 V2.8 H5.4 V1.3 H1.6Z" fill="#e9e9e9" stroke="#555" stroke-width="0.8"/><path d="M1.4 3 H7.4" stroke="#777" stroke-width="0.6"/><path d="M2.2 4.4 H6.6 M2.2 5.8 H5.4" stroke="#fafafa" stroke-width="0.7"/><rect x="6" y="6" width="2.6" height="2.7" fill="#0c0c0c"/></svg>
<span style="left:645.20px;top:364px;font-size:5.05px;line-height:6px;color:#111;font-weight:400;-webkit-text-stroke:0.12px #111;">Master Opacity Change</span>
<svg style="left:617.8px;top:362.8px;" width="9" height="9" viewBox="0 0 9 9"><path d="M7.4 1 L3.8 4.4 L4.8 5.4 Z" fill="#222"/><path d="M1.4 7.4 C2.2 7.2 2.2 5.8 3.4 5.2 L4.4 6.2 C3.8 7.6 2.4 7.8 1.4 7.4Z" fill="#111"/><path d="M1 3.6 A2.4 2.4 0 0 1 4.4 1.6" fill="none" stroke="#444" stroke-width="0.7"/></svg>
<div style="left:781.3px;top:185.3px;width:7.4px;height:187px;background:#f1f1f1;border-left:0.6px solid #c4c4c4;"></div>
<svg style="left:781.8px;top:187px;" width="7" height="5" viewBox="0 0 7 5"><path d="M2 3.4 h2.8 l-1.4 -1.8z" fill="#4a4a4a"/></svg>
<svg style="left:781.8px;top:366px;" width="7" height="5" viewBox="0 0 7 5"><path d="M2 1.6 h2.8 l-1.4 1.8z" fill="#4a4a4a"/></svg>
<div style="left:782.2px;top:193.5px;width:5.8px;height:143px;background:linear-gradient(90deg,#f6f6f6,#dcdcdc);border:0.6px solid #9c9c9c;border-radius:1px;"></div>
<div style="left:783.6px;top:263.5px;width:3px;height:0.6px;background:#888;"></div>
<div style="left:783.6px;top:265px;width:3px;height:0.6px;background:#888;"></div>
<div style="left:783.6px;top:266.5px;width:3px;height:0.6px;background:#888;"></div>
<div style="left:616.3px;top:372.3px;width:172.4px;height:8px;background:#d8d8d8;border-top:0.6px solid #a8a8a8;"></div>
<svg style="left:741px;top:372px;" width="9" height="7" viewBox="0 0 9 7"><rect x="1" y="1.4" width="6" height="4.4" fill="#999" stroke="#444" stroke-width="0.6"/><path d="M2 2.6 H6 M2 4 H6" stroke="#444" stroke-width="0.5"/></svg>
<svg style="left:756px;top:372px;" width="9" height="7" viewBox="0 0 9 7"><rect x="1.4" y="2.2" width="6" height="3.8" fill="#aaa" stroke="#444" stroke-width="0.6"/><circle cx="4.4" cy="4.1" r="1.1" fill="#444"/><rect x="5" y="1" width="2" height="1.4" fill="#444"/></svg>
<svg style="left:770px;top:372px;" width="9" height="7" viewBox="0 0 9 7"><path d="M2.6 2.4 H6 L5.7 6.2 H2.9Z" fill="#666" stroke="#222" stroke-width="0.6"/><path d="M2.2 1.8 H6.4 M3.6 1.1 H5" stroke="#222" stroke-width="0.7"/></svg>
<svg style="left:781.5px;top:374px;" width="6" height="6" viewBox="0 0 6 6"><path d="M5 1 L1 5 M5 3 L3 5" stroke="#999" stroke-width="0.6"/></svg>
<div style="left:616.3px;top:380.2px;width:172.4px;height:1.6px;background:#6a6a6a;"></div>
<div style="left:616.3px;top:381.8px;width:172.4px;height:8.2px;background:linear-gradient(#a6a6a6,#9a9a9a);border-bottom:0.6px solid #777;"></div>
<svg style="left:779px;top:383.5px;" width="10" height="6" viewBox="0 0 10 6"><path d="M0.8 1.6 h2.6 l-1.3 1.7z" fill="#333"/><path d="M4.6 1 H8.6 M4.6 2.6 H8.6 M4.6 4.2 H8.6" stroke="#444" stroke-width="0.7"/></svg>
<div style="left:616.3px;top:381.8px;width:24.700000000000045px;height:8.5px;background:linear-gradient(#e4e4e4,#d8d8d8);border-right:0.6px solid #777;"></div>
<span style="left:619.20px;top:384px;font-size:4.49px;line-height:5px;color:#1a1a1a;font-weight:700;">LAYERS</span>
<div style="left:674.1999999999999px;top:381.8px;width:0.6px;height:8.2px;background:#7c7c7c;"></div>
<span style="left:643.60px;top:384px;font-size:4.75px;line-height:5px;color:#3a3a3a;font-weight:700;">CHANNELS</span>
<div style="left:697.1999999999999px;top:381.8px;width:0.6px;height:8.2px;background:#7c7c7c;"></div>
<span style="left:678.40px;top:383px;font-size:5.00px;line-height:6px;color:#3a3a3a;font-weight:700;">PATHS</span>
<div style="left:741.1999999999999px;top:381.8px;width:0.6px;height:8.2px;background:#7c7c7c;"></div>
<span style="left:702.00px;top:384px;font-size:4.69px;line-height:5px;color:#3a3a3a;font-weight:700;">ADJUSTMENTS</span>
<div style="left:617.7px;top:392px;width:57px;height:8.4px;background:#fdfdfd;border:0.5px solid #d2d2d2;"></div>
<span style="left:620.00px;top:394px;font-size:4.90px;line-height:5px;color:#111;font-weight:400;">Normal</span>
<svg style="left:668px;top:393.5px;" width="7" height="6" viewBox="0 0 7 6"><path d="M1.4 2 h3.6 l-1.8 2.2z" fill="#111"/></svg>
<span style="left:677.70px;top:393px;font-size:5.13px;line-height:6px;color:#222;font-weight:400;">Opacity:</span>
<div style="left:698.2px;top:392px;width:17.8px;height:8.4px;background:#fdfdfd;border:0.5px solid #d2d2d2;"></div>
<span style="left:700.80px;top:394px;font-size:4.90px;line-height:5px;color:#111;font-weight:400;">100%</span>
<div style="left:718.2px;top:392.6px;width:6.2px;height:7.4px;background:linear-gradient(#f4f4f4,#e2e2e2);border:0.5px solid #c0c0c0;"></div>
<svg style="left:718.6px;top:393.8px;" width="6" height="6" viewBox="0 0 6 6"><path d="M1.9 1.4 L3.7 2.6 L1.9 3.8Z" fill="#444"/></svg>
<div style="left:616.3px;top:401.8px;width:172.4px;height:0.8px;background:#b4b4b4;"></div>
<div style="left:616.3px;top:402.6px;width:172.4px;height:0.7px;background:#ececec;"></div>
<span style="left:619.60px;top:406px;font-size:5.19px;line-height:6px;color:#222;font-weight:400;">Lock:</span>
<svg style="left:634.5px;top:405.2px;" width="8" height="8" viewBox="0 0 8 8"><g transform="translate(3.8 3.8) scale(0.82) translate(-3.8 -3.8)"><rect x="1" y="1" width="5.4" height="5.4" fill="#fff" stroke="#555" stroke-width="0.6"/><path d="M1 1 h2.7 v2.7 h-2.7z M3.7 3.7 h2.7 v2.7 h-2.7z" fill="#bbb"/></g></svg>
<svg style="left:643.5px;top:405.2px;" width="8" height="8" viewBox="0 0 8 8"><g transform="translate(3.8 3.8) scale(0.82) translate(-3.8 -3.8)"><path d="M6.6 0.8 L3 4.2 L3.8 5 Z" fill="#222"/><path d="M1 6.8 C1.8 6.6 1.8 5.4 2.8 4.8 L3.6 5.6 C3.2 6.8 2 7.2 1 6.8Z" fill="#111"/></g></svg>
<svg style="left:652.5px;top:405.2px;" width="8" height="8" viewBox="0 0 8 8"><g transform="translate(3.8 3.8) scale(0.82) translate(-3.8 -3.8)"><path d="M3.7 0.6 V6.8 M0.6 3.7 H6.8" stroke="#222" stroke-width="0.9"/><path d="M3.7 0 l-1.1 1.4 h2.2z M3.7 7.4 l-1.1 -1.4 h2.2z M0 3.7 l1.4 -1.1 v2.2z M7.4 3.7 l-1.4 -1.1 v2.2z" fill="#222"/></g></svg>
<svg style="left:661.5px;top:405.2px;" width="8" height="8" viewBox="0 0 8 8"><g transform="translate(3.8 3.8) scale(0.82) translate(-3.8 -3.8)"><rect x="1.4" y="3.4" width="4.8" height="3.4" fill="#222"/><path d="M2.4 3.4 V2.4 A1.4 1.4 0 0 1 5.2 2.4 V3.4" fill="none" stroke="#222" stroke-width="0.8"/></g></svg>
<span style="left:689.00px;top:407px;font-size:4.82px;line-height:5px;color:#222;font-weight:400;">Fill:</span>
<div style="left:698.2px;top:404.7px;width:17.8px;height:8.4px;background:#fdfdfd;border:0.5px solid #d2d2d2;"></div>
<span style="left:700.80px;top:407px;font-size:4.90px;line-height:5px;color:#111;font-weight:400;">100%</span>
<div style="left:718.2px;top:405.2px;width:6.2px;height:7.4px;background:linear-gradient(#f4f4f4,#e2e2e2);border:0.5px solid #c0c0c0;"></div>
<svg style="left:718.6px;top:406.4px;" width="6" height="6" viewBox="0 0 6 6"><path d="M1.9 1.4 L3.7 2.6 L1.9 3.8Z" fill="#444"/></svg>
<div style="left:616.3px;top:415.2px;width:172.4px;height:0.7px;background:#9a9a9a;"></div>
<div style="left:616.3px;top:415.9px;width:165px;height:15.6px;background:linear-gradient(#dbdbdb,#d7d7d7);"></div>
<div style="left:627.4px;top:415.9px;width:0.6px;height:15.5px;background:#b4b4b4;"></div>
<div style="left:618.2px;top:419.09999999999997px;width:8px;height:8.4px;background:#e4e4e4;border:0.5px solid #cbcbcb;"></div>
<div style="left:629.2px;top:417.4px;width:16.6px;height:11.6px;background:#fff;border:0.6px solid #555;background-image:linear-gradient(45deg,#d8d8d8 25%,transparent 25%,transparent 75%,#d8d8d8 75%),linear-gradient(45deg,#d8d8d8 25%,transparent 25%,transparent 75%,#d8d8d8 75%);background-size:4px 4px;background-position:0 0,2px 2px;"></div>
<span style="left:649.60px;top:421px;font-size:5.05px;line-height:6px;color:#111;font-weight:400;-webkit-text-stroke:0.12px #111;">Back Cover Template</span>
<div style="left:616.3px;top:431.4px;width:165px;height:15.6px;background:linear-gradient(#dbdbdb,#d7d7d7);"></div>
<div style="left:627.4px;top:431.4px;width:0.6px;height:15.5px;background:#b4b4b4;"></div>
<svg style="left:618.5px;top:435.9px;" width="8" height="6" viewBox="0 0 8 6"><path d="M0.4 1.9 C1.6 0.5 5.6 0.5 6.8 1.9 C6.6 3.5 5 4.9 3.6 4.9 C2.2 4.9 0.6 3.5 0.4 1.9Z" fill="#1a1a1a"/></svg>
<div style="left:629.2px;top:432.9px;width:16.6px;height:11.6px;background:#fff;border:0.6px solid #555;background-image:linear-gradient(45deg,#d8d8d8 25%,transparent 25%,transparent 75%,#d8d8d8 75%),linear-gradient(45deg,#d8d8d8 25%,transparent 25%,transparent 75%,#d8d8d8 75%);background-size:4px 4px;background-position:0 0,2px 2px;"></div>
<span style="left:649.60px;top:436px;font-size:5.05px;line-height:6px;color:#111;font-weight:400;-webkit-text-stroke:0.12px #111;">Front cover template</span>
<div style="left:616.3px;top:446.9px;width:165px;height:15.6px;background:linear-gradient(#dbdbdb,#d7d7d7);"></div>
<div style="left:627.8px;top:446.9px;width:153.5px;height:15.5px;background:#3399ff;"></div>
<div style="left:627.4px;top:446.9px;width:0.6px;height:15.5px;background:#b4b4b4;"></div>
<svg style="left:618.5px;top:451.4px;" width="8" height="6" viewBox="0 0 8 6"><path d="M0.4 1.9 C1.6 0.5 5.6 0.5 6.8 1.9 C6.6 3.5 5 4.9 3.6 4.9 C2.2 4.9 0.6 3.5 0.4 1.9Z" fill="#1a1a1a"/></svg>
<div style="left:629.2px;top:448.4px;width:16.6px;height:11.6px;background:#0c0c0c;border:0.7px solid #111;outline:0.5px solid #ddd;"></div>
<span style="left:649.60px;top:452px;font-size:5.05px;line-height:6px;color:#fff;font-weight:700;">Layer 1</span>
<div style="left:616.3px;top:462.4px;width:165px;height:15.6px;background:linear-gradient(#dbdbdb,#d7d7d7);"></div>
<div style="left:627.4px;top:462.4px;width:0.6px;height:15.5px;background:#b4b4b4;"></div>
<div style="left:618.2px;top:465.59999999999997px;width:8px;height:8.4px;background:#e4e4e4;border:0.5px solid #cbcbcb;"></div>
<div style="left:629.2px;top:463.9px;width:16.6px;height:11.6px;background:#fff;border:0.6px solid #555;background-image:linear-gradient(45deg,#d8d8d8 25%,transparent 25%,transparent 75%,#d8d8d8 75%),linear-gradient(45deg,#d8d8d8 25%,transparent 25%,transparent 75%,#d8d8d8 75%);background-size:4px 4px;background-position:0 0,2px 2px;"></div>
<svg style="left:646.8px;top:466.4px;" width="5" height="8" viewBox="0 0 5 8"><rect x="1.4" y="0.6" width="2" height="2.6" rx="0.8" fill="none" stroke="#444" stroke-width="0.7"/><rect x="1.4" y="3.6" width="2" height="2.6" rx="0.8" fill="none" stroke="#444" stroke-width="0.7"/></svg>
<div style="left:653px;top:463.9px;width:16.4px;height:11.6px;background:#fff;border:0.7px solid #333;"></div>
<span style="left:673.70px;top:467px;font-size:5.05px;line-height:6px;color:#111;font-weight:400;-webkit-text-stroke:0.12px #111;">Ash Character Layer copy</span>
<div style="left:616.3px;top:477.9px;width:165px;height:15.6px;background:linear-gradient(#dbdbdb,#d7d7d7);"></div>
<div style="left:627.4px;top:477.9px;width:0.6px;height:15.5px;background:#b4b4b4;"></div>
<svg style="left:618.5px;top:482.4px;" width="8" height="6" viewBox="0 0 8 6"><path d="M0.4 1.9 C1.6 0.5 5.6 0.5 6.8 1.9 C6.6 3.5 5 4.9 3.6 4.9 C2.2 4.9 0.6 3.5 0.4 1.9Z" fill="#1a1a1a"/></svg>
<div style="left:629.2px;top:479.4px;width:16.6px;height:11.6px;background:#fff;border:0.6px solid #555;background-image:linear-gradient(45deg,#d8d8d8 25%,transparent 25%,transparent 75%,#d8d8d8 75%),linear-gradient(45deg,#d8d8d8 25%,transparent 25%,transparent 75%,#d8d8d8 75%);background-size:4px 4px;background-position:0 0,2px 2px;"></div>
<span style="left:649.60px;top:483px;font-size:5.05px;line-height:6px;color:#111;font-weight:400;-webkit-text-stroke:0.12px #111;">Createspace Templates</span>
<div style="left:616.3px;top:493.4px;width:165px;height:15.6px;background:linear-gradient(#dbdbdb,#d7d7d7);"></div>
<div style="left:627.4px;top:493.4px;width:0.6px;height:15.5px;background:#b4b4b4;"></div>
<svg style="left:618.5px;top:497.9px;" width="8" height="6" viewBox="0 0 8 6"><path d="M0.4 1.9 C1.6 0.5 5.6 0.5 6.8 1.9 C6.6 3.5 5 4.9 3.6 4.9 C2.2 4.9 0.6 3.5 0.4 1.9Z" fill="#1a1a1a"/></svg>
<div style="left:629.2px;top:494.9px;width:16.6px;height:11.6px;background:#fff;border:0.6px solid #555;background-image:linear-gradient(45deg,#d8d8d8 25%,transparent 25%,transparent 75%,#d8d8d8 75%),linear-gradient(45deg,#d8d8d8 25%,transparent 25%,transparent 75%,#d8d8d8 75%);background-size:4px 4px;background-position:0 0,2px 2px;"></div>
<span style="left:649.60px;top:498px;font-size:5.05px;line-height:6px;color:#111;font-weight:400;-webkit-text-stroke:0.12px #111;">Layer 12</span>
<div style="left:616.3px;top:430.79999999999995px;width:165px;height:0.9px;background:#b2b2b2;"></div>
<div style="left:616.3px;top:446.29999999999995px;width:165px;height:0.9px;background:#b2b2b2;"></div>
<div style="left:616.3px;top:461.79999999999995px;width:165px;height:0.9px;background:#b2b2b2;"></div>
<div style="left:616.3px;top:477.29999999999995px;width:165px;height:0.9px;background:#b2b2b2;"></div>
<div style="left:616.3px;top:492.79999999999995px;width:165px;height:0.9px;background:#b2b2b2;"></div>
<div style="left:773.6px;top:494.2px;width:7.6px;height:14.4px;background:#e6e6e6;"></div>
<span style="left:766.50px;top:498px;font-size:6.40px;line-height:7px;color:#111;font-weight:700;font-style:italic;font-family:'Liberation Serif',serif;">fx</span>
<svg style="left:774.5px;top:499px;" width="6" height="6" viewBox="0 0 6 6"><path d="M1.2 3.6 h3.4 l-1.7 -2.2z" fill="#222"/></svg>
<div style="left:616.3px;top:508.9px;width:165px;height:42px;background:#dcdcdc;"></div>
<div style="left:627.4px;top:508.9px;width:0.6px;height:42px;background:#b4b4b4;"></div>
<svg style="left:637.2px;top:511px;" width="8" height="6" viewBox="0 0 8 6"><path d="M0.4 1.9 C1.6 0.5 5.6 0.5 6.8 1.9 C6.6 3.5 5 4.9 3.6 4.9 C2.2 4.9 0.6 3.5 0.4 1.9Z" fill="#1a1a1a"/></svg>
<span style="left:647.00px;top:510px;font-size:5.05px;line-height:6px;color:#1c1c1c;font-weight:400;">Effects</span>
<div style="left:653.5px;top:517.9px;width:127.8px;height:0.7px;background:#b8b8b8;"></div>
<div style="left:653.5px;top:518.5999999999999px;width:127.8px;height:0.6px;background:#e8e8e8;"></div>
<svg style="left:646.2px;top:520.0px;" width="8" height="6" viewBox="0 0 8 6"><path d="M0.4 1.9 C1.6 0.5 5.6 0.5 6.8 1.9 C6.6 3.5 5 4.9 3.6 4.9 C2.2 4.9 0.6 3.5 0.4 1.9Z" fill="#1a1a1a"/></svg>
<span style="left:655.70px;top:520px;font-size:5.05px;line-height:6px;color:#1c1c1c;font-weight:400;">Drop Shadow</span>
<div style="left:653.5px;top:527.4px;width:127.8px;height:0.7px;background:#b8b8b8;"></div>
<div style="left:653.5px;top:528.0999999999999px;width:127.8px;height:0.6px;background:#e8e8e8;"></div>
<svg style="left:646.2px;top:529.5px;" width="8" height="6" viewBox="0 0 8 6"><path d="M0.4 1.9 C1.6 0.5 5.6 0.5 6.8 1.9 C6.6 3.5 5 4.9 3.6 4.9 C2.2 4.9 0.6 3.5 0.4 1.9Z" fill="#1a1a1a"/></svg>
<span style="left:655.70px;top:529px;font-size:5.05px;line-height:6px;color:#1c1c1c;font-weight:400;">Inner Shadow</span>
<div style="left:653.5px;top:536.9px;width:127.8px;height:0.7px;background:#b8b8b8;"></div>
<div style="left:653.5px;top:537.5999999999999px;width:127.8px;height:0.6px;background:#e8e8e8;"></div>
<svg style="left:646.2px;top:539.0px;" width="8" height="6" viewBox="0 0 8 6"><path d="M0.4 1.9 C1.6 0.5 5.6 0.5 6.8 1.9 C6.6 3.5 5 4.9 3.6 4.9 C2.2 4.9 0.6 3.5 0.4 1.9Z" fill="#1a1a1a"/></svg>
<span style="left:655.70px;top:539px;font-size:5.05px;line-height:6px;color:#1c1c1c;font-weight:400;">Outer Glow</span>
<div style="left:653.5px;top:546.4px;width:127.8px;height:0.7px;background:#b8b8b8;"></div>
<div style="left:653.5px;top:547.0999999999999px;width:127.8px;height:0.6px;background:#e8e8e8;"></div>
<svg style="left:646.2px;top:548.5px;" width="8" height="6" viewBox="0 0 8 6"><path d="M0.4 1.9 C1.6 0.5 5.6 0.5 6.8 1.9 C6.6 3.5 5 4.9 3.6 4.9 C2.2 4.9 0.6 3.5 0.4 1.9Z" fill="#1a1a1a"/></svg>
<span style="left:655.70px;top:548px;font-size:5.05px;line-height:6px;color:#1c1c1c;font-weight:400;">Color Overlay</span>
<div style="left:781.3px;top:415.9px;width:7.4px;height:135px;background:#f1f1f1;border-left:0.6px solid #c4c4c4;"></div>
<svg style="left:781.8px;top:417.5px;" width="7" height="5" viewBox="0 0 7 5"><path d="M2 3.4 h2.8 l-1.4 -1.8z" fill="#4a4a4a"/></svg>
<svg style="left:781.8px;top:544.5px;" width="7" height="5" viewBox="0 0 7 5"><path d="M2 1.6 h2.8 l-1.4 1.8z" fill="#4a4a4a"/></svg>
<div style="left:782.2px;top:424px;width:5.8px;height:18.5px;background:linear-gradient(90deg,#f6f6f6,#dcdcdc);border:0.6px solid #9c9c9c;border-radius:1px;"></div>
<div style="left:783.6px;top:431.5px;width:3px;height:0.6px;background:#888;"></div>
<div style="left:783.6px;top:433px;width:3px;height:0.6px;background:#888;"></div>
<div style="left:783.6px;top:434.5px;width:3px;height:0.6px;background:#888;"></div>
<div style="left:616.3px;top:550.9px;width:172.4px;height:10.2px;background:#dcdcdc;border-top:0.7px solid #9a9a9a;"></div>
<svg style="left:687.8px;top:552.5px;" width="10" height="7" viewBox="0 0 10 7"><ellipse cx="2.8" cy="3.5" rx="1.5" ry="1.1" fill="none" stroke="#888" stroke-width="0.8"/><ellipse cx="5.8" cy="3.5" rx="1.5" ry="1.1" fill="none" stroke="#888" stroke-width="0.8"/></svg>
<span style="left:702.50px;top:552px;font-size:6.40px;line-height:7px;color:#111;font-weight:700;font-style:italic;font-family:'Liberation Serif',serif;">fx</span>
<svg style="left:708.5px;top:555px;" width="4" height="4" viewBox="0 0 4 4"><path d="M0.4 1 h2.6 l-1.3 1.6z" fill="#222"/></svg>
<svg style="left:716px;top:552.3px;" width="9" height="8" viewBox="0 0 9 8"><rect x="1" y="1" width="6.6" height="5.8" fill="#555" stroke="#222" stroke-width="0.7"/><circle cx="4.3" cy="3.9" r="1.7" fill="#f4f4f4"/></svg>
<svg style="left:729.5px;top:552.3px;" width="11" height="8" viewBox="0 0 11 8"><circle cx="4" cy="4" r="2.9" fill="#f0f0f0" stroke="#222" stroke-width="0.8"/><path d="M4 1.1 A2.9 2.9 0 0 0 4 6.9Z" fill="#222"/><path d="M7.6 5.4 h2.4 l-1.2 1.5z" fill="#222"/></svg>
<svg style="left:743.5px;top:552.3px;" width="9" height="8" viewBox="0 0 9 8"><path d="M1.4 3.4 V6 H6.4 V3.4 H4 V2.8 H2 V3.4Z" fill="#dcdcdc" stroke="#444" stroke-width="0.7"/><path d="M1.4 6 H6.4 V4" stroke="#222" stroke-width="0.9" fill="none"/></svg>
<svg style="left:757.5px;top:552.3px;" width="9" height="8" viewBox="0 0 9 8"><path d="M1.6 1.8 H6.2 V6.2 H3.2 L1.6 4.8Z" fill="#e6e6e6" stroke="#444" stroke-width="0.7"/><path d="M1.6 4.8 H3.2 V6.2Z" fill="#444"/><path d="M6.2 2.6 V6.2 H3.4" stroke="#222" stroke-width="0.9" fill="none"/></svg>
<svg style="left:770.5px;top:552.3px;" width="9" height="8" viewBox="0 0 9 8"><path d="M2.6 2.6 H6 L5.7 6.6 H2.9Z" fill="#666" stroke="#222" stroke-width="0.6"/><path d="M2.2 2 H6.4 M3.6 1.3 H5" stroke="#222" stroke-width="0.7"/></svg>
<svg style="left:781.5px;top:554.5px;" width="6" height="6" viewBox="0 0 6 6"><path d="M5 1 L1 5 M5 3 L3 5" stroke="#999" stroke-width="0.6"/></svg>
<div style="left:798.7px;top:32.9px;width:8px;height:552px;background:#d2d2d2;"></div>
</div></div></body></html>
